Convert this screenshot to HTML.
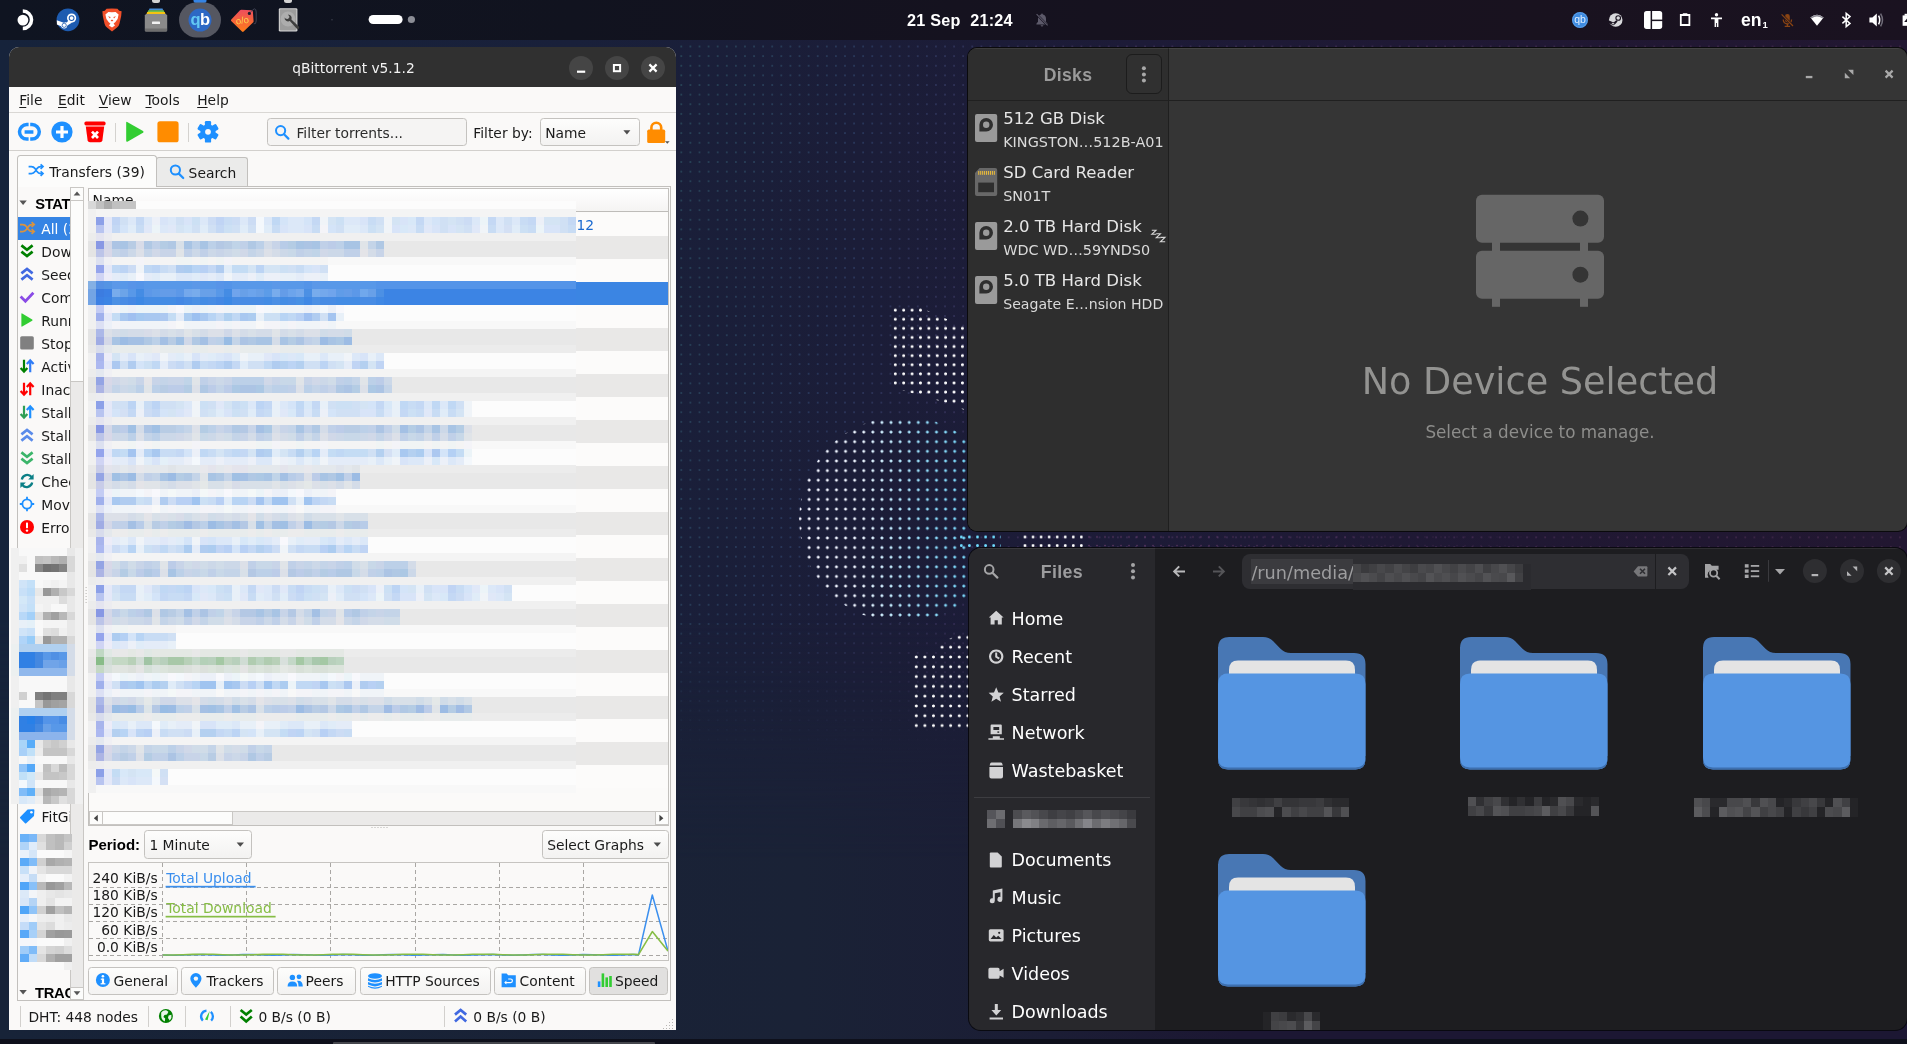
<!DOCTYPE html>
<html lang="en">
<head>
<meta charset="utf-8">
<title>Desktop</title>
<style>
*{box-sizing:border-box;margin:0;padding:0}
html,body{width:1907px;height:1044px;overflow:hidden;background:#1a1e38}
body{position:relative;font-family:"DejaVu Sans","Liberation Sans",sans-serif;font-size:13.85px;color:#000}
.abs{position:absolute}
/* wallpaper */
#wall{position:absolute;left:0;top:0;width:1907px;height:1044px;background:linear-gradient(90deg,#16233b 0%,#19203a 30%,#1b1d38 45%,#1d1b37 60%,#201833 80%,#221731 100%)}
#wall2{position:absolute;left:0;top:0;width:1907px;height:1044px;background:linear-gradient(90deg,#172338 0%,#1a2236 42%,#1b1d35 55%,#1c1733 65%,#1c1733 100%);-webkit-mask-image:linear-gradient(180deg,transparent 620px,#000 860px);mask-image:linear-gradient(180deg,transparent 620px,#000 860px)}
#bottomband{position:absolute;left:0;top:1039px;width:1907px;height:5px;background:#0e101b}
#bottomstrip{position:absolute;left:333px;top:1042px;width:322px;height:2px;background:#45464d;border-radius:1px 1px 0 0}
/* top bar */
#topbar{will-change:transform;position:absolute;left:0;top:0;width:1907px;height:40px;background:linear-gradient(90deg,#0f1421 0%,#11131f 30%,#15121f 50%,#19121f 80%,#1a1220 100%)}
/* windows */
.win{position:absolute;overflow:hidden;will-change:transform}
</style>
</head>
<body>
<div id="wall"></div>
<div id="wall2"></div>
<!--BLOBS-START-->
<div class="abs" style="left:676px;top:40px;width:1231px;height:760px;-webkit-mask-image:linear-gradient(#000 0,#000 560px,transparent 720px);mask-image:linear-gradient(#000 0,#000 560px,transparent 720px)"><div class="abs" style="left:0;top:0;width:1231px;height:760px;background:linear-gradient(100deg,rgba(70,150,150,.42) 0%,rgba(80,120,180,.38) 15%,rgba(130,90,160,.34) 30%,rgba(150,80,130,.3) 100%);-webkit-mask-image:radial-gradient(circle at 4.55px 4.82px,#000 0,#000 0.45px,transparent 1.15px);mask-image:radial-gradient(circle at 4.55px 4.82px,#000 0,#000 0.45px,transparent 1.15px);-webkit-mask-size:9.1px 9.64px;mask-size:9.1px 9.64px;-webkit-mask-position:0.75px 1.70px;mask-position:0.75px 1.70px;"></div></div>
<div class="abs" style="left:884px;top:300px;width:90px;height:120px;background:#ffffff;-webkit-mask-image:radial-gradient(circle at 4.2px 4.55px,#000 0,#000 1.0px,transparent 1.85px);mask-image:radial-gradient(circle at 4.2px 4.55px,#000 0,#000 1.0px,transparent 1.85px);-webkit-mask-size:8.4px 9.1px;mask-size:8.4px 9.1px;-webkit-mask-position:7.10px 5.65px;mask-position:7.10px 5.65px;clip-path:polygon(8px 5px,30px 5px,84px 28px,84px 112px,70px 105px,10px 88px);"></div>
<div class="abs" style="left:0;top:0;width:968px;height:1044px;overflow:hidden"><div class="abs" style="left:798.5px;top:416.0px;width:207.0px;height:207.0px;background:linear-gradient(90deg,#f4f4ff 0%,#eef6ff 30%,#92dcf8 60%,#58cdf5 100%);-webkit-mask-image:radial-gradient(circle at 4.55px 4.82px,#000 0,#000 1.0px,transparent 1.85px);mask-image:radial-gradient(circle at 4.55px 4.82px,#000 0,#000 1.0px,transparent 1.85px);-webkit-mask-size:9.1px 9.64px;mask-size:9.1px 9.64px;-webkit-mask-position:5.65px 1.66px;mask-position:5.65px 1.66px;border-radius:50%;"></div></div>
<div class="abs" style="left:957px;top:531px;width:44px;height:19px;background:#6fdcff;-webkit-mask-image:radial-gradient(circle at 4.05px 4.3px,#000 0,#000 1.0px,transparent 1.8px);mask-image:radial-gradient(circle at 4.05px 4.3px,#000 0,#000 1.0px,transparent 1.8px);-webkit-mask-size:8.1px 8.6px;mask-size:8.1px 8.6px;-webkit-mask-position:0.25px 1.70px;mask-position:0.25px 1.70px;"></div>
<div class="abs" style="left:1021px;top:531px;width:64px;height:19px;background:#ffffff;-webkit-mask-image:radial-gradient(circle at 4.025px 4.3px,#000 0,#000 1.0px,transparent 1.8px);mask-image:radial-gradient(circle at 4.025px 4.3px,#000 0,#000 1.0px,transparent 1.8px);-webkit-mask-size:8.05px 8.6px;mask-size:8.05px 8.6px;-webkit-mask-position:8.02px 1.70px;mask-position:8.02px 1.70px;"></div>
<div class="abs" style="left:1086px;top:531px;width:500px;height:19px;background:linear-gradient(90deg,rgba(170,90,150,.4),rgba(170,90,150,.22) 40%,rgba(170,90,150,0));-webkit-mask-image:radial-gradient(circle at 4.0px 4.3px,#000 0,#000 0.5px,transparent 1.2px);mask-image:radial-gradient(circle at 4.0px 4.3px,#000 0,#000 0.5px,transparent 1.2px);-webkit-mask-size:8.0px 8.6px;mask-size:8.0px 8.6px;-webkit-mask-position:7.00px 1.70px;mask-position:7.00px 1.70px;"></div>
<div class="abs" style="left:900px;top:628px;width:74px;height:110px;background:#ffffff;-webkit-mask-image:radial-gradient(circle at 4.3px 4.9px,#000 0,#000 1.0px,transparent 1.85px);mask-image:radial-gradient(circle at 4.3px 4.9px,#000 0,#000 1.0px,transparent 1.85px);-webkit-mask-size:8.6px 9.8px;mask-size:8.6px 9.8px;-webkit-mask-position:3.40px 4.50px;mask-position:3.40px 4.50px;clip-path:polygon(11px 24px,36px 24px,40px 14px,68px 4px,74px 4px,74px 103px,11px 103px);"></div>
<!--BLOBS-END-->
<div id="bottomband"></div>
<div id="bottomstrip"></div>
<div id="topbar">
<!--TOPBAR-START-->
<!-- left launchers -->
<svg class="abs" style="left:0;top:0" width="440" height="40" viewBox="0 0 440 40">
  <!-- running indicators -->
  <rect x="152" y="-3" width="8" height="6" rx="2.5" fill="#d4d4d4"/>
  <rect x="193.5" y="-3" width="13" height="6" rx="2.5" fill="#3584e4"/>
  <rect x="284" y="-3" width="8" height="6" rx="2.5" fill="#d4d4d4"/>
  <!-- budgie menu -->
  <circle cx="22.900" cy="20.100" r="5.400" fill="#fff"/>
  <path d="M22.800 9.300 A10.500 10.500 0 0 1 22.800 30.300 L22.800 26.800 A7 7 0 0 0 22.800 12.800 Z" fill="#fff"/>
  <!-- steam -->
  <circle cx="68" cy="19.800" r="11.400" fill="#1d5bb0"/>
  <circle cx="71.600" cy="18.100" r="4.600" fill="#fff"/>
  <circle cx="71.600" cy="18.100" r="2.900" fill="#1d5bb0"/>
  <circle cx="71.600" cy="18.100" r="1.900" fill="#fff"/>
  <path d="M56.800 20.200 L63.800 22.800 Q65.400 22 66.800 22.400 L68.400 20.400 L71.800 22.700 L67.400 25.600 A3.300 3.300 0 0 1 61 26.300 L56.900 24.600 Z" fill="#fff"/>
  <circle cx="64.200" cy="25.300" r="2.100" fill="none" stroke="#1d5bb0" stroke-width=".800"/>
  <!-- brave -->
  <path d="M112 8.4 L117.5 8.8 L119.2 10.8 L121.6 11.2 L121.2 16 L119.4 24 Q118.8 26.2 117 27.6 L112 31.4 L107 27.6 Q105.2 26.2 104.6 24 L102.8 16 L102.4 11.2 L104.8 10.8 L106.5 8.8 Z" fill="#f1502a"/>
  <path d="M112 12.2 L115.6 12 L118.6 14.6 L117.6 19 L115.2 22.2 L113.6 23.4 L115 25.4 L112 27.6 L109 25.4 L110.4 23.4 L108.8 22.2 L106.4 19 L105.4 14.6 L108.4 12 Z" fill="#fff"/>
  <path d="M108 16.2 L110.6 17 L110 18.4 Z M116 16.2 L113.4 17 L114 18.4 Z M110.6 20.6 L112 21.6 L113.4 20.6 L112 19.6 Z" fill="#f1502a"/>
  <!-- file manager -->
  <path d="M149.5 8.4 h13 l0.8 2 h-14.6 z" fill="#4a90d9"/>
  <path d="M148.3 10.2 h15.4 l0.8 2 h-17 z" fill="#73c048"/>
  <path d="M147.2 12 h17.6 l0.8 2.2 h-19.2 z" fill="#f5c211"/>
  <path d="M146 14 h20 l1.2 1.6 v15 q0 .8 -.8 .8 h-20.8 q-.8 0 -.8 -.8 v-15 z" fill="#8a8a8a"/>
  <path d="M145 28.6 h22 v2 q0 .8 -.8 .8 h-20.4 q-.8 0 -.8 -.8 z" fill="#6e6e6e"/>
  <rect x="152" y="21.6" width="8" height="2.4" rx=".6" fill="#f2f2f2"/>
  <!-- qb highlighted -->
  <rect x="179" y="2.5" width="42" height="35" rx="17.5" fill="#555761"/>
  <circle cx="200" cy="20.1" r="11.5" fill="#2d68c4"/>
  <text x="200" y="25" text-anchor="middle" font-family="Liberation Sans, sans-serif" font-weight="700" font-size="16.5" letter-spacing="-.6"><tspan fill="#62c8f4">q</tspan><tspan fill="#fff">b</tspan></text>
  <!-- tag -->
  <defs><linearGradient id="tg" x1="0" y1="0" x2="0" y2="1"><stop offset="0" stop-color="#ee4d5e"/><stop offset="1" stop-color="#ff7d17"/></linearGradient></defs>
  <path d="M241.400 9.700 L251.400 10.200 Q252.800 10.400 252.900 11.800 L253.600 21.200 Q253.600 22 253 22.600 L243.600 31.600 Q242.800 32.300 242 31.500 L231.200 21 Q230.600 20.300 231.300 19.500 L240 10.300 Q240.600 9.700 241.400 9.700 Z" fill="url(#tg)"/>
  <circle cx="249.400" cy="13.400" r="1.600" fill="#1a1c2c"/>
  <path d="M250.400 12.400 Q255.800 5.500 256.200 12 V21 Q256 24.500 253.800 23.800" fill="none" stroke="#4a4d5e" stroke-width=".800"/>
  <text x="242.400" y="23.600" text-anchor="middle" font-family="Liberation Sans, sans-serif" font-weight="400" font-size="9.500" fill="#ffd84a" transform="rotate(-8 242.400 21)">o/o</text>
  <!-- disk utility -->
  <rect x="278.8" y="8.2" width="18.6" height="23.4" rx="1.4" fill="#d6d6d6"/>
  <rect x="279.8" y="9.2" width="16.6" height="21.4" rx="1" fill="#9c9c9c"/>
  <circle cx="288" cy="19" r="7.4" fill="#adadad"/>
  <path d="M284.6 17.4 a3.6 3.6 0 0 0 5.2 3.6 l6.8 7.6 q1.2 1 2.2 0 q.9 -1 0 -2.1 l-7.4 -7 a3.6 3.6 0 0 0 -3.4 -5 l1.6 2.4 l-1.6 2 l-2.2 -.2 z" fill="#3e3e3e"/>
  <!-- workspace -->
  <circle cx="332" cy="19.8" r=".8" fill="#3a3d4a"/>
  <rect x="368.6" y="14.9" width="34" height="9.2" rx="4.6" fill="#fff"/>
  <circle cx="411.4" cy="19.5" r="3.6" fill="#8c8e96"/>
</svg>
<!-- clock -->
<div class="abs" style="font-family:'Liberation Sans','DejaVu Sans',sans-serif;font-weight:700;left:907px;top:10.300px;font-size:16.200px;line-height:20px;color:#fff;white-space:pre;letter-spacing:.250px">21 Sep  21:24</div>
<svg class="abs" style="left:1034px;top:12px" width="16" height="16" viewBox="0 0 16 16">
  <path d="M8 1.6 q.9 0 .9 .9 q3.1 .8 3.1 4.3 v3 l1.6 2 v.8 h-11.2 v-.8 l1.6 -2 v-3 q0 -3.5 3.1 -4.3 q0 -.9 .9 -.9 z M6.6 13.2 h2.8 q-.2 1.3 -1.4 1.3 t-1.4 -1.3z" fill="#5d5a6a"/>
  <path d="M2.6 2.2 L13.6 13.4" stroke="#15121f" stroke-width="2.2"/>
  <path d="M2.6 2.2 L13.6 13.4" stroke="#5d5a6a" stroke-width="1.1"/>
</svg>
<!-- tray -->
<svg class="abs" style="left:1560px;top:0" width="347" height="40" viewBox="1560 0 347 40">
  <circle cx="1580" cy="20" r="8" fill="#3e8be0"/>
  <circle cx="1580" cy="20" r="7.4" fill="none" stroke="#79b4f2" stroke-width=".8" opacity=".6"/>
  <text x="1580" y="23.4" text-anchor="middle" font-family="Liberation Sans, sans-serif" font-size="10.5" fill="#dfeeff">qb</text>
  <!-- steam tray -->
  <circle cx="1615.7" cy="20" r="6.8" fill="#d9d9dc"/>
  <circle cx="1618.2" cy="18" r="2.3" fill="none" stroke="#1a1320" stroke-width="1.1"/>
  <path d="M1609 20.6 L1613.6 22.6 L1616.2 20.2 L1617.6 21.6 L1614.8 24.4 L1611 24.2 L1609 23 Z" fill="#1a1320"/>
  <circle cx="1613" cy="23.6" r="1.3" fill="#d9d9dc" stroke="#1a1320" stroke-width=".7"/>
  <!-- layout -->
  <rect x="1644" y="10.9" width="18.2" height="18" rx="2.6" fill="#fff"/>
  <rect x="1650.6" y="10" width="1.5" height="20" fill="#19121f"/>
  <rect x="1652" y="19.6" width="11" height="1.5" fill="#19121f"/>
  <!-- clipboard -->
  <path d="M1680.8 15 h8.6 v10 h-8.6 z" fill="none" stroke="#fff" stroke-width="1.8"/>
  <rect x="1682.6" y="13.2" width="5" height="2.6" rx=".8" fill="#fff"/>
  <!-- accessibility -->
  <circle cx="1716.5" cy="14.8" r="1.7" fill="#fff"/>
  <path d="M1711 17.4 h11 v1.9 h-3.6 v7.6 h-1.5 v-4 h-.8 v4 h-1.5 v-7.6 h-3.6 z" fill="#fff"/>
  <!-- en1 -->
  <text x="1741" y="25.8" font-family="Liberation Sans, sans-serif" font-weight="700" font-size="17.6" fill="#fff">en</text>
  <text x="1762.4" y="28" font-family="Liberation Sans, sans-serif" font-weight="700" font-size="9.5" fill="#fff">1</text>
  <!-- mic muted -->
  <g fill="#8a4413" stroke="none">
    <rect x="1785" y="14" width="4.8" height="8.4" rx="2.4"/>
    <path d="M1782.6 19.6 h1.3 q0 3.6 3.5 3.6 t3.5 -3.6 h1.3 q0 4.2 -4.1 4.8 v1.4 h2 v1.2 h-5.4 v-1.2 h2 v-1.4 q-4.1 -.6 -4.1 -4.8z"/>
  </g>
  <path d="M1781.6 14.4 L1793 26" stroke="#19121f" stroke-width="2.4"/>
  <path d="M1781.6 14.4 L1793 26" stroke="#8a4413" stroke-width="1.2"/>
  <!-- wifi -->
  <path d="M1817 25.8 L1810.4 17.4 Q1817 12.2 1823.6 17.4 Z" fill="#fff"/>
  <path d="M1810.4 17.4 Q1817 12.2 1823.6 17.4 L1822.6 18.6 Q1817 14.2 1811.4 18.6 Z" fill="#8c8a94"/>
  <!-- bluetooth -->
  <path d="M1842.4 16.6 L1850 23.4 L1846.2 26.6 V13.4 L1850 16.6 L1842.4 23.4" fill="none" stroke="#fff" stroke-width="1.5" stroke-linejoin="miter"/>
  <!-- volume -->
  <path d="M1869.4 17.4 h3 l4.4 -3.8 v12.8 l-4.4 -3.8 h-3 z" fill="#fff"/>
  <path d="M1878.6 15.6 q2.2 4.4 0 8.8" fill="none" stroke="#fff" stroke-width="1.5"/>
  <path d="M1880.6 13.6 q3.8 6.4 0 12.8" fill="none" stroke="#6f6c78" stroke-width="1.5"/>
  <!-- battery (cut) -->
  <path d="M1902.6 15.4 h5 v10.4 h-5 z" fill="#fff"/>
  <path d="M1904.6 13.8 h3 v2 h-3z" fill="#fff"/>
  <path d="M1904.2 22 l2.8 -3.6 v3.6z" fill="#19121f"/>
</svg>

<!--TOPBAR-END-->
</div>
<!--QB-START-->
<div class="win" id="qb" style="left:9px;top:47px;width:667px;height:983px;border-radius:10px 10px 0 0;background:#faf9f8"><div class="abs" style="left:-9px;top:-47px;width:1907px;height:1044px">
<div class="abs" style="left:9px;top:47px;width:667px;height:40px;background:#303030;"></div>
<div class="abs" style="left:53.5px;width:600px;text-align:center;top:59px;font-size:13.8px;line-height:18px;color:#f2f2f2;white-space:pre;">qBittorrent v5.1.2</div>
<div class="abs" style="left:569px;top:56px;width:24px;height:24px;border-radius:12px;background:#454545"></div>
<div class="abs" style="left:605px;top:56px;width:24px;height:24px;border-radius:12px;background:#454545"></div>
<div class="abs" style="left:641px;top:56px;width:24px;height:24px;border-radius:12px;background:#454545"></div>
<svg class="abs" style="left:569px;top:56px" width="96" height="24" viewBox="569 56 96 24">
<rect x="577" y="70.6" width="8.2" height="2.2" fill="#fff"/>
<rect x="613.9" y="65" width="6.200" height="6.200" fill="none" stroke="#fff" stroke-width="2"/>
<path d="M649.4 64.4 L656.6 71.6 M656.6 64.4 L649.4 71.6" stroke="#fff" stroke-width="2.2"/>
</svg>
<div class="abs" style="left:19.3px;top:91px;font-size:13.85px;line-height:18px;color:#1a1a1a;white-space:pre;text-underline-offset:2px;"><u>F</u>ile</div>
<div class="abs" style="left:58.0px;top:91px;font-size:13.85px;line-height:18px;color:#1a1a1a;white-space:pre;text-underline-offset:2px;"><u>E</u>dit</div>
<div class="abs" style="left:98.8px;top:91px;font-size:13.85px;line-height:18px;color:#1a1a1a;white-space:pre;text-underline-offset:2px;"><u>V</u>iew</div>
<div class="abs" style="left:145.5px;top:91px;font-size:13.85px;line-height:18px;color:#1a1a1a;white-space:pre;text-underline-offset:2px;"><u>T</u>ools</div>
<div class="abs" style="left:197.2px;top:91px;font-size:13.85px;line-height:18px;color:#1a1a1a;white-space:pre;text-underline-offset:2px;"><u>H</u>elp</div>
<div class="abs" style="left:9px;top:112px;width:667px;height:1px;background:#d9d7d4;"></div>
<div class="abs" style="left:267px;top:118.2px;width:199.500px;height:27.6px;border:1px solid #c4c2bf;border-radius:3.5px;background:#f5f4f3;z-index:-0"></div>
<div class="abs" style="left:540.400px;top:118.2px;width:99.200px;height:28.3px;border:1px solid #c4c2bf;border-radius:3.5px;background:linear-gradient(#fdfdfc,#f3f2f1)"></div>
<svg class="abs" style="left:9px;top:113px" width="667" height="37" viewBox="9 113 667 37">
<g fill="none" stroke="#1e90ff" stroke-width="3.5">
<path d="M28.6 124.5 H26.8 a7.3 7.3 0 0 0 0 14.6 H28.6"/>
<path d="M30.2 124.5 H32 a7.3 7.3 0 0 1 0 14.6 H30.2"/>
<path d="M24.6 131.9 H33.4"/>
</g>
<circle cx="62" cy="132" r="10.6" fill="#1e90ff"/>
<path d="M56 132 H68 M62 126 V138" stroke="#fff" stroke-width="3.2"/>
<rect x="84.4" y="121.4" width="21.2" height="4" rx="1.6" fill="#ff0000"/>
<path d="M85.8 126.4 H104.2 L102.4 140.2 Q102.1 142.3 100 142.3 H90 Q87.9 142.3 87.6 140.2 Z" fill="#ff0000"/>
<path d="M92 131.6 L98 138 M98 131.6 L92 138" stroke="#fff" stroke-width="2.7"/>
<rect x="115" y="123" width="1" height="19" fill="#d4d2cf"/>
<path d="M127.2 121.9 Q126.2 121.4 126.2 122.8 V140.8 Q126.2 142.2 127.4 141.7 L143 132.8 Q144.2 131.9 143 131 Z" fill="#32cd32"/>
<rect x="157.4" y="121.3" width="21.2" height="21" rx="2.6" fill="#ff8c00"/>
<rect x="188" y="123" width="1" height="19" fill="#d4d2cf"/>
<g transform="translate(208 131.8)" fill="#1e90ff">
<circle r="7.6"/>
<g id="tooth"><rect x="-3.1" y="-10.8" width="6.2" height="5" rx="1.2"/></g>
<rect x="-3.1" y="-10.8" width="6.2" height="5" rx="1.2" transform="rotate(60)"/>
<rect x="-3.1" y="-10.8" width="6.2" height="5" rx="1.2" transform="rotate(120)"/>
<rect x="-3.1" y="-10.8" width="6.2" height="5" rx="1.2" transform="rotate(180)"/>
<rect x="-3.1" y="-10.8" width="6.2" height="5" rx="1.2" transform="rotate(240)"/>
<rect x="-3.1" y="-10.8" width="6.2" height="5" rx="1.2" transform="rotate(300)"/>
<circle r="2.9" fill="#faf9f8"/>
</g>
<!-- filter search icon -->
<circle cx="280.6" cy="130.6" r="4.6" fill="none" stroke="#1e90ff" stroke-width="2"/>
<path d="M284 134.2 L288.4 138.6" stroke="#1e90ff" stroke-width="2.2" stroke-linecap="round"/>
<!-- lock -->
<path d="M651.4 131 V127.6 a4.9 4.9 0 0 1 9.8 0 V131" fill="none" stroke="#ff8c00" stroke-width="2.6"/>
<rect x="647.2" y="129.6" width="18" height="13.4" rx="1.6" fill="#ff8c00"/>
<path d="M665 141.2 h4.6 l-2.3 2.6z" fill="#555"/>
<!-- combo arrow -->
<path d="M623.4 130.2 h7 l-3.5 4.2z" fill="#4d4d4d"/>
</svg>
<div class="abs" style="left:9px;top:150px;width:667px;height:1px;background:#d2d0cd;"></div>
<div class="abs" style="left:296.4px;top:124px;font-size:13.85px;line-height:18px;color:#2b2b2b;white-space:pre;">Filter torrents...</div>
<div class="abs" style="left:473.3px;top:124px;font-size:13.85px;line-height:18px;color:#1a1a1a;white-space:pre;">Filter by:</div>
<div class="abs" style="left:545.2px;top:124px;font-size:13.85px;line-height:18px;color:#1a1a1a;white-space:pre;">Name</div>
<div class="abs" style="left:16.5px;top:186px;width:654.5px;height:814.5px;border:1px solid #c2c0bd;background:#faf9f8"></div>
<div class="abs" style="left:156px;top:157.4px;width:91.6px;height:29px;border:1px solid #c2c0bd;border-bottom:none;border-radius:3px 3px 0 0;background:#ebebea"></div>
<div class="abs" style="left:156px;top:186px;width:92px;height:1px;background:#c2c0bd;"></div>
<div class="abs" style="left:16.5px;top:155.4px;width:140px;height:32px;border:1px solid #c2c0bd;border-bottom:none;border-radius:3.5px 3.5px 0 0;background:#fcfcfb"></div>
<div class="abs" style="left:49.2px;top:163px;font-size:13.85px;line-height:18px;color:#1a1a1a;white-space:pre;">Transfers (39)</div>
<div class="abs" style="left:188.6px;top:164px;font-size:13.85px;line-height:18px;color:#1a1a1a;white-space:pre;">Search</div>
<svg class="abs" style="left:26px;top:160px" width="220" height="24" viewBox="26 160 220 24">
<g fill="none" stroke="#1e90ff" stroke-width="1.7">
<path d="M28.6 166.6 H31.4 Q33.6 166.6 35 168.6 L37 171.6 Q38.4 173.6 40.6 173.6 H42.4"/>
<path d="M28.6 173.6 H31.4 Q33.6 173.6 35 171.6 L37 168.6 Q38.4 166.6 40.6 166.6 H42.4"/>
<path d="M40.6 164.4 L43 166.6 L40.6 168.8 M40.6 171.4 L43 173.6 L40.6 175.8"/>
</g>
<circle cx="175.4" cy="170" r="4.6" fill="none" stroke="#1e90ff" stroke-width="2"/>
<path d="M178.8 173.6 L183.2 178" stroke="#1e90ff" stroke-width="2.2" stroke-linecap="round"/>
</svg>
<div class="abs" style="left:17.5px;top:187px;width:52.500px;height:813px;overflow:hidden"><div class="abs" style="left:-17.5px;top:-187px;width:400px;height:1044px">
<div class="abs" style="left:35.3px;top:194px;font-size:14.7px;line-height:20px;color:#000;white-space:pre;font-family:'Liberation Sans','DejaVu Sans',sans-serif;font-weight:700;letter-spacing:-.3px;">STATUS</div>
<div class="abs" style="left:18px;top:217px;width:60px;height:23px;background:#3584e4;"></div>
<div class="abs" style="left:41.3px;top:220px;font-size:13.85px;line-height:18px;color:#fff;white-space:pre;">All (39)</div>
<div class="abs" style="left:41.3px;top:243px;font-size:13.85px;line-height:18px;color:#1a1a1a;white-space:pre;">Downloading (0)</div>
<div class="abs" style="left:41.3px;top:266px;font-size:13.85px;line-height:18px;color:#1a1a1a;white-space:pre;">Seeding (39)</div>
<div class="abs" style="left:41.3px;top:289px;font-size:13.85px;line-height:18px;color:#1a1a1a;white-space:pre;">Completed (39)</div>
<div class="abs" style="left:41.3px;top:312px;font-size:13.85px;line-height:18px;color:#1a1a1a;white-space:pre;">Running (39)</div>
<div class="abs" style="left:41.3px;top:335px;font-size:13.85px;line-height:18px;color:#1a1a1a;white-space:pre;">Stopped (0)</div>
<div class="abs" style="left:41.3px;top:358px;font-size:13.85px;line-height:18px;color:#1a1a1a;white-space:pre;">Active (0)</div>
<div class="abs" style="left:41.3px;top:381px;font-size:13.85px;line-height:18px;color:#1a1a1a;white-space:pre;">Inactive (39)</div>
<div class="abs" style="left:41.3px;top:404px;font-size:13.85px;line-height:18px;color:#1a1a1a;white-space:pre;">Stalled (39)</div>
<div class="abs" style="left:41.3px;top:427px;font-size:13.85px;line-height:18px;color:#1a1a1a;white-space:pre;">Stalled Uploading (39)</div>
<div class="abs" style="left:41.3px;top:450px;font-size:13.85px;line-height:18px;color:#1a1a1a;white-space:pre;">Stalled Downloading (0)</div>
<div class="abs" style="left:41.3px;top:473px;font-size:13.85px;line-height:18px;color:#1a1a1a;white-space:pre;">Checking (0)</div>
<div class="abs" style="left:41.3px;top:496px;font-size:13.85px;line-height:18px;color:#1a1a1a;white-space:pre;">Moving (0)</div>
<div class="abs" style="left:41.3px;top:519px;font-size:13.85px;line-height:18px;color:#1a1a1a;white-space:pre;">Errored (0)</div>
<div class="abs" style="left:41.6px;top:808px;font-size:13.85px;line-height:18px;color:#1a1a1a;white-space:pre;">FitGirl (0)</div>
<div class="abs" style="left:35.1px;top:983px;font-size:14.7px;line-height:20px;color:#000;white-space:pre;font-family:'Liberation Sans','DejaVu Sans',sans-serif;font-weight:700;letter-spacing:-.3px;">TRACKERS</div>
<svg class="abs" style="left:17px;top:187px" width="60" height="813" viewBox="17 187 60 813">
<path d="M19.4 200.6 h7.4 l-3.7 4.4z" fill="#555"/>
<path d="M19.4 990 h7.4 l-3.7 4.4z" fill="#555"/>
<g fill="none" stroke="#d9933f" stroke-width="1.7">
<path d="M20 224.6 H22.8 Q25 224.6 26.4 226.6 L28.4 229.6 Q29.8 231.6 32 231.6 H33.2"/>
<path d="M20 231.6 H22.8 Q25 231.6 26.4 229.6 L28.4 226.6 Q29.8 224.6 32 224.6 H33.2"/>
<path d="M31.6 222.2 L34.2 224.6 L31.6 227 M31.6 229.2 L34.2 231.6 L31.6 234"/></g>
<path d="M21.4 245.4 L27 249.8 L32.6 245.4 M21.4 251.6 L27 256.0 L32.6 251.6" fill="none" stroke="#008000" stroke-width="2.7"/>
<path d="M21.4 279.6 L27 275.2 L32.6 279.6 M21.4 273.4 L27 269.0 L32.6 273.4" fill="none" stroke="#4169e1" stroke-width="2.7"/>
<path d="M20.6 296.6 L25.4 301.2 L33.4 292.8" fill="none" stroke="#8a4be6" stroke-width="2.8"/>
<path d="M22.2 313.4 Q21.4 313 21.4 314 V326 Q21.4 327 22.2 326.6 L32.2 320.8 Q33 320.2 32.2 319.6 Z" fill="#32cd32"/>
<rect x="20.2" y="336.2" width="13.6" height="13.4" rx="1.6" fill="#808080"/>
<path d="M24 359.8 V371 M20.6 368 L24 371.6 L27.4 368" fill="none" stroke="#008000" stroke-width="2.2"/><path d="M30.2 372.2 V361 M26.8 364 L30.2 360.4 L33.6 364" fill="none" stroke="#2f7cf6" stroke-width="2.2"/>
<path d="M24 382.8 V394 M20.6 391 L24 394.6 L27.4 391" fill="none" stroke="#ff0000" stroke-width="2.2"/><path d="M30.2 395.2 V384 M26.8 387 L30.2 383.4 L33.6 387" fill="none" stroke="#ff0000" stroke-width="2.2"/>
<path d="M24 405.8 V417 M20.6 414 L24 417.6 L27.4 414" fill="none" stroke="#2e9e54" stroke-width="2.2"/><path d="M30.2 418.2 V407 M26.8 410 L30.2 406.4 L33.6 410" fill="none" stroke="#1e90ff" stroke-width="2.2"/>
<path d="M21.4 440.6 L27 436.2 L32.6 440.6 M21.4 434.4 L27 430.0 L32.6 434.4" fill="none" stroke="#5a8bea" stroke-width="2.7"/>
<path d="M21.4 452.4 L27 456.8 L32.6 452.4 M21.4 458.6 L27 463.0 L32.6 458.6" fill="none" stroke="#3bb56a" stroke-width="2.7"/>
<g fill="none" stroke="#0b7f86" stroke-width="2.3">
<path d="M21.8 479.4 A5.6 5.6 0 0 1 31.6 477"/><path d="M32.2 482.6 A5.6 5.6 0 0 1 22.4 485"/></g>
<path d="M33.6 474 V479.4 H28.2z" fill="#0b7f86"/><path d="M20.4 488 V482.6 H25.8z" fill="#0b7f86"/>
<circle cx="27" cy="504" r="4.6" fill="none" stroke="#1e90ff" stroke-width="1.8"/><path d="M27 496.8 V499.6 M27 508.4 V511.2 M19.8 504 H22.6 M31.4 504 H34.2" stroke="#1e90ff" stroke-width="1.8"/>
<circle cx="27" cy="527" r="7" fill="#ff0000"/><rect x="26" y="522.6" width="2" height="5.6" rx=".6" fill="#fff"/><circle cx="27" cy="530.6" r="1.2" fill="#fff"/>
<path d="M27.6 809.6 L33.4 809.2 Q34.4 809.2 34.4 810.2 L34 816 L26.2 823.2 Q25.6 823.8 25 823.2 L20.2 818.2 Q19.6 817.6 20.2 817 Z" fill="#1e90ff"/><circle cx="31.4" cy="812.2" r="1.3" fill="#faf9f8"/>
</svg>
</div></div>
<div class="abs" style="left:70px;top:187px;width:13.500px;height:813px;background:#ebeae9;border-left:1px solid #c9c7c4;border-right:1px solid #c9c7c4"></div>
<div class="abs" style="left:70px;top:187px;width:13.500px;height:13.500px;background:#fcfcfb;border:1px solid #c9c7c4"></div>
<div class="abs" style="left:70px;top:199.500px;width:13.500px;height:182px;background:#fcfcfb;border:1px solid #c9c7c4"></div>
<div class="abs" style="left:70px;top:986.500px;width:13.500px;height:13.500px;background:#fcfcfb;border:1px solid #c9c7c4"></div>
<svg class="abs" style="left:70px;top:187px" width="14" height="813" viewBox="70 187 14 813"><path d="M73.6 195.4 h6.8 l-3.4 -4z" fill="#555"/><path d="M73.6 991.2 h6.8 l-3.4 4z" fill="#555"/></svg>
<svg class="abs" style="left:0;top:540px" width="90" height="440" viewBox="0 540 90 440" shape-rendering="crispEdges">
<path fill="#f0f0f0" d="M11 548h8v8h-8zM75 548h8v8h-8zM11 556h16v8h-16zM75 556h8v8h-8zM11 564h8v8h-8zM75 564h8v8h-8zM11 572h8v8h-8zM75 572h8v8h-8zM11 580h8v8h-8zM51 580h8v8h-8zM75 580h8v8h-8zM11 588h8v8h-8zM75 588h8v8h-8zM11 596h8v8h-8zM35 596h24v8h-24zM75 596h8v8h-8zM11 604h8v8h-8zM43 604h8v8h-8zM75 604h8v8h-8zM11 612h8v8h-8zM75 612h8v8h-8zM11 620h8v8h-8zM75 620h8v8h-8zM11 628h8v8h-8zM59 628h8v8h-8zM75 628h8v8h-8zM11 636h8v8h-8zM75 636h8v8h-8zM75 644h8v8h-8zM75 652h8v8h-8zM75 660h8v8h-8zM75 668h8v8h-8zM11 676h8v8h-8zM75 676h8v8h-8zM11 684h8v8h-8zM75 684h8v8h-8zM11 692h8v8h-8zM75 692h8v8h-8zM11 700h8v8h-8zM75 700h8v8h-8zM75 708h8v8h-8zM75 716h8v8h-8zM75 724h8v8h-8zM75 732h8v8h-8zM11 740h8v8h-8zM75 740h8v8h-8zM11 748h8v8h-8zM75 748h8v8h-8zM11 756h8v8h-8zM75 756h8v8h-8zM11 764h8v8h-8zM75 764h8v8h-8zM11 772h8v8h-8zM75 772h8v8h-8zM11 780h8v8h-8zM75 780h8v8h-8zM11 788h8v8h-8zM75 788h8v8h-8zM11 796h8v8h-8zM35 796h8v8h-8zM75 796h8v8h-8z"/>
<path fill="#f8f8f8" d="M19 548h48v8h-48zM27 556h8v8h-8zM27 564h8v8h-8zM19 572h48v8h-48zM35 580h8v8h-8zM51 604h16v8h-16zM35 620h8v8h-8zM35 628h8v8h-8zM19 676h48v8h-48zM19 684h48v8h-48zM27 692h8v8h-8zM19 700h16v8h-16zM19 756h8v8h-8zM35 756h32v8h-32zM35 780h32v8h-32z"/>
<path fill="#e8e8e8" d="M67 548h8v8h-8zM67 572h8v8h-8zM67 580h8v8h-8zM35 588h8v8h-8zM67 596h8v8h-8zM67 604h8v8h-8zM67 620h8v8h-8zM67 628h8v8h-8zM35 636h8v8h-8zM67 676h8v8h-8zM67 684h8v8h-8zM35 740h8v8h-8zM67 740h8v8h-8zM67 756h8v8h-8zM35 772h8v8h-8zM67 780h8v8h-8z"/>
<path fill="#c0c0c0" d="M35 556h8v8h-8zM43 764h8v8h-8z"/>
<path fill="#c4c4c4" d="M43 556h8v8h-8zM35 700h8v8h-8zM43 748h24v8h-24zM43 772h16v8h-16z"/>
<path fill="#b8b8b8" d="M51 556h8v8h-8zM59 612h8v8h-8zM43 796h8v8h-8z"/>
<path fill="#b0b0b0" d="M59 556h8v8h-8zM51 588h8v8h-8zM43 612h8v8h-8zM51 636h16v8h-16zM51 788h8v8h-8z"/>
<path fill="#d8d8d8" d="M67 556h8v8h-8zM67 564h8v8h-8zM67 588h8v8h-8zM67 612h8v8h-8zM67 636h8v8h-8zM67 692h8v8h-8zM67 700h8v8h-8zM67 748h8v8h-8zM51 764h8v8h-8zM67 764h8v8h-8zM67 772h8v8h-8zM67 788h8v8h-8zM67 796h8v8h-8z"/>
<path fill="#e0e0e0" d="M19 564h8v8h-8zM35 612h8v8h-8zM43 628h8v8h-8zM35 788h8v8h-8zM59 796h8v8h-8z"/>
<path fill="#888888" d="M35 564h8v8h-8z"/>
<path fill="#707070" d="M43 564h8v8h-8z"/>
<path fill="#747474" d="M51 564h8v8h-8zM43 692h8v8h-8z"/>
<path fill="#848484" d="M59 564h8v8h-8z"/>
<path fill="#d0e4f8" d="M19 580h8v8h-8zM19 604h8v8h-8zM19 628h8v8h-8zM27 780h8v8h-8z"/>
<path fill="#c4e0f8" d="M27 580h8v8h-8zM27 604h8v8h-8z"/>
<path fill="#f4f4f4" d="M43 580h8v8h-8zM59 580h8v8h-8zM35 604h8v8h-8zM43 620h24v8h-24zM35 764h8v8h-8z"/>
<path fill="#c8e0f8" d="M19 588h8v8h-8zM27 596h8v8h-8zM27 628h8v8h-8z"/>
<path fill="#bcdcf8" d="M27 588h8v8h-8z"/>
<path fill="#989898" d="M43 588h8v8h-8zM43 636h8v8h-8zM43 700h8v8h-8z"/>
<path fill="#c8c8c8" d="M59 588h8v8h-8zM51 740h8v8h-8zM59 772h8v8h-8zM51 796h8v8h-8z"/>
<path fill="#d4e8f8" d="M19 596h8v8h-8z"/>
<path fill="#dcdcdc" d="M59 596h8v8h-8zM51 628h8v8h-8z"/>
<path fill="#b8d8f8" d="M19 612h8v8h-8z"/>
<path fill="#a4d0f8" d="M27 612h8v8h-8z"/>
<path fill="#a0a0a0" d="M51 612h8v8h-8zM51 700h8v8h-8z"/>
<path fill="#e8f0f8" d="M19 620h8v8h-8zM27 756h8v8h-8z"/>
<path fill="#e4f0f8" d="M27 620h8v8h-8z"/>
<path fill="#b0d4f8" d="M19 636h8v8h-8z"/>
<path fill="#98ccf8" d="M27 636h8v8h-8z"/>
<path fill="#ecf0f0" d="M11 644h8v8h-8zM11 652h8v8h-8zM11 660h8v8h-8zM11 668h8v8h-8zM11 708h8v8h-8zM11 716h8v8h-8zM11 724h8v8h-8zM11 732h8v8h-8z"/>
<path fill="#b0d0f0" d="M19 644h48v8h-48zM19 708h48v8h-48z"/>
<path fill="#d4dce8" d="M67 644h8v8h-8zM67 652h8v8h-8zM67 660h8v8h-8zM67 668h8v8h-8zM67 708h8v8h-8zM67 716h8v8h-8zM67 724h8v8h-8zM67 732h8v8h-8z"/>
<path fill="#3080e4" d="M19 652h16v8h-16zM19 660h16v8h-16zM19 716h8v8h-8zM19 724h16v8h-16z"/>
<path fill="#4488e0" d="M35 652h8v8h-8zM35 660h8v8h-8zM35 724h8v8h-8z"/>
<path fill="#5898e8" d="M43 652h8v8h-8zM59 652h8v8h-8zM51 724h16v8h-16z"/>
<path fill="#5090e4" d="M51 652h8v8h-8z"/>
<path fill="#70a4e8" d="M43 660h16v8h-16z"/>
<path fill="#68a0e8" d="M59 660h8v8h-8zM43 724h8v8h-8z"/>
<path fill="#90b8ec" d="M19 668h48v8h-48z"/>
<path fill="#d0d0d0" d="M19 692h8v8h-8zM43 740h8v8h-8zM59 740h8v8h-8z"/>
<path fill="#808080" d="M35 692h8v8h-8zM51 692h16v8h-16z"/>
<path fill="#a4a4a4" d="M59 700h8v8h-8z"/>
<path fill="#2880e8" d="M27 716h8v8h-8z"/>
<path fill="#3880e0" d="M35 716h8v8h-8z"/>
<path fill="#5494e8" d="M43 716h16v8h-16z"/>
<path fill="#488ce4" d="M59 716h8v8h-8z"/>
<path fill="#8cb4ec" d="M19 732h48v8h-48z"/>
<path fill="#a8d4f8" d="M19 740h8v8h-8z"/>
<path fill="#58acf8" d="M27 740h8v8h-8z"/>
<path fill="#a8d0f8" d="M19 748h8v8h-8z"/>
<path fill="#c0e0f8" d="M27 748h8v8h-8zM19 772h8v8h-8z"/>
<path fill="#ececec" d="M35 748h8v8h-8z"/>
<path fill="#90c4f8" d="M19 764h8v8h-8z"/>
<path fill="#54a8f8" d="M27 764h8v8h-8z"/>
<path fill="#bcbcbc" d="M59 764h8v8h-8z"/>
<path fill="#d0e8f8" d="M27 772h8v8h-8z"/>
<path fill="#f4f8fc" d="M19 780h8v8h-8z"/>
<path fill="#80bcf8" d="M19 788h8v8h-8z"/>
<path fill="#60b0f8" d="M27 788h8v8h-8z"/>
<path fill="#a8a8a8" d="M43 788h8v8h-8z"/>
<path fill="#b4b4b4" d="M59 788h8v8h-8z"/>
<path fill="#d8e8f8" d="M19 796h8v8h-8z"/>
<path fill="#e0ecf8" d="M27 796h8v8h-8z"/>
<rect x="20.0" y="834" width="8.8" height="8" fill="#6ab2f8"/>
<rect x="28.7" y="834" width="8.8" height="8" fill="#7ab8f8"/>
<rect x="37.4" y="834" width="8.8" height="8" fill="#d8d8d8"/>
<rect x="46.1" y="834" width="8.8" height="8" fill="#c0c0c0"/>
<rect x="54.8" y="834" width="8.8" height="8" fill="#b8b8b8"/>
<rect x="63.5" y="834" width="8.8" height="8" fill="#c4c4c4"/>
<rect x="20.0" y="842" width="8.8" height="8" fill="#b0d4f8"/>
<rect x="28.7" y="842" width="8.8" height="8" fill="#e0ecfa"/>
<rect x="37.4" y="842" width="8.8" height="8" fill="#e0e0e0"/>
<rect x="46.1" y="842" width="8.8" height="8" fill="#c0c0c0"/>
<rect x="54.8" y="842" width="8.8" height="8" fill="#b8b8b8"/>
<rect x="63.5" y="842" width="8.8" height="8" fill="#d0d0d0"/>
<rect x="20.0" y="850" width="8.8" height="8" fill="#eaf1fa"/>
<rect x="28.7" y="850" width="8.8" height="8" fill="#d5e6f8"/>
<rect x="37.4" y="850" width="8.8" height="8" fill="#fafafa"/>
<rect x="46.1" y="850" width="8.8" height="8" fill="#fafafa"/>
<rect x="54.8" y="850" width="8.8" height="8" fill="#fafafa"/>
<rect x="63.5" y="850" width="8.8" height="8" fill="#f5f5f5"/>
<rect x="20.0" y="858" width="8.8" height="8" fill="#5aaaf8"/>
<rect x="28.7" y="858" width="8.8" height="8" fill="#80bcf8"/>
<rect x="37.4" y="858" width="8.8" height="8" fill="#d0d0d0"/>
<rect x="46.1" y="858" width="8.8" height="8" fill="#a8a8a8"/>
<rect x="54.8" y="858" width="8.8" height="8" fill="#b0b0b0"/>
<rect x="63.5" y="858" width="8.8" height="8" fill="#b4b4b4"/>
<rect x="20.0" y="866" width="8.8" height="8" fill="#c8e0f8"/>
<rect x="28.7" y="866" width="8.8" height="8" fill="#f0f3f8"/>
<rect x="37.4" y="866" width="8.8" height="8" fill="#e4e4e4"/>
<rect x="46.1" y="866" width="8.8" height="8" fill="#d8d8d8"/>
<rect x="54.8" y="866" width="8.8" height="8" fill="#d8d8d8"/>
<rect x="63.5" y="866" width="8.8" height="8" fill="#d8d8d8"/>
<rect x="20.0" y="874" width="8.8" height="8" fill="#e5eefa"/>
<rect x="28.7" y="874" width="8.8" height="8" fill="#c5dcf5"/>
<rect x="37.4" y="874" width="8.8" height="8" fill="#f3f3f3"/>
<rect x="46.1" y="874" width="8.8" height="8" fill="#fafafa"/>
<rect x="54.8" y="874" width="8.8" height="8" fill="#fafafa"/>
<rect x="63.5" y="874" width="8.8" height="8" fill="#f3f3f3"/>
<rect x="20.0" y="882" width="8.8" height="8" fill="#50a5f8"/>
<rect x="28.7" y="882" width="8.8" height="8" fill="#88c0f8"/>
<rect x="37.4" y="882" width="8.8" height="8" fill="#b8b8b8"/>
<rect x="46.1" y="882" width="8.8" height="8" fill="#989898"/>
<rect x="54.8" y="882" width="8.8" height="8" fill="#a0a0a0"/>
<rect x="63.5" y="882" width="8.8" height="8" fill="#b8b8b8"/>
<rect x="20.0" y="890" width="8.8" height="8" fill="#dce9f8"/>
<rect x="28.7" y="890" width="8.8" height="8" fill="#f3f5f8"/>
<rect x="37.4" y="890" width="8.8" height="8" fill="#efefef"/>
<rect x="46.1" y="890" width="8.8" height="8" fill="#e8e8e8"/>
<rect x="54.8" y="890" width="8.8" height="8" fill="#e4e4e4"/>
<rect x="63.5" y="890" width="8.8" height="8" fill="#e8e8e8"/>
<rect x="20.0" y="898" width="8.8" height="8" fill="#d8e6f8"/>
<rect x="28.7" y="898" width="8.8" height="8" fill="#b5d4f5"/>
<rect x="37.4" y="898" width="8.8" height="8" fill="#efefef"/>
<rect x="46.1" y="898" width="8.8" height="8" fill="#e4e4e4"/>
<rect x="54.8" y="898" width="8.8" height="8" fill="#f3f3f3"/>
<rect x="63.5" y="898" width="8.8" height="8" fill="#f3f3f3"/>
<rect x="20.0" y="906" width="8.8" height="8" fill="#50a5f8"/>
<rect x="28.7" y="906" width="8.8" height="8" fill="#90c4f8"/>
<rect x="37.4" y="906" width="8.8" height="8" fill="#d0d0d0"/>
<rect x="46.1" y="906" width="8.8" height="8" fill="#a0a0a0"/>
<rect x="54.8" y="906" width="8.8" height="8" fill="#c0c0c0"/>
<rect x="63.5" y="906" width="8.8" height="8" fill="#b4b4b4"/>
<rect x="20.0" y="914" width="8.8" height="8" fill="#e8effa"/>
<rect x="28.7" y="914" width="8.8" height="8" fill="#f5f6f8"/>
<rect x="37.4" y="914" width="8.8" height="8" fill="#eeeeee"/>
<rect x="46.1" y="914" width="8.8" height="8" fill="#ececec"/>
<rect x="54.8" y="914" width="8.8" height="8" fill="#f0f0f0"/>
<rect x="63.5" y="914" width="8.8" height="8" fill="#e8e8e8"/>
<rect x="20.0" y="922" width="8.8" height="8" fill="#c5dcf8"/>
<rect x="28.7" y="922" width="8.8" height="8" fill="#a0ccf8"/>
<rect x="37.4" y="922" width="8.8" height="8" fill="#e4e4e4"/>
<rect x="46.1" y="922" width="8.8" height="8" fill="#dcdcdc"/>
<rect x="54.8" y="922" width="8.8" height="8" fill="#f0f0f0"/>
<rect x="63.5" y="922" width="8.8" height="8" fill="#ececec"/>
<rect x="20.0" y="930" width="8.8" height="8" fill="#58a8f8"/>
<rect x="28.7" y="930" width="8.8" height="8" fill="#a8d0f8"/>
<rect x="37.4" y="930" width="8.8" height="8" fill="#d4d4d4"/>
<rect x="46.1" y="930" width="8.8" height="8" fill="#a0a0a0"/>
<rect x="54.8" y="930" width="8.8" height="8" fill="#989898"/>
<rect x="63.5" y="930" width="8.8" height="8" fill="#9a9a9a"/>
<rect x="20.0" y="938" width="8.8" height="8" fill="#f5f6fa"/>
<rect x="28.7" y="938" width="8.8" height="8" fill="#f5f6fa"/>
<rect x="37.4" y="938" width="8.8" height="8" fill="#fafafa"/>
<rect x="46.1" y="938" width="8.8" height="8" fill="#fafafa"/>
<rect x="54.8" y="938" width="8.8" height="8" fill="#fafafa"/>
<rect x="63.5" y="938" width="8.8" height="8" fill="#f0f0f0"/>
<rect x="20.0" y="946" width="8.8" height="8" fill="#a0ccf8"/>
<rect x="28.7" y="946" width="8.8" height="8" fill="#80bcf8"/>
<rect x="37.4" y="946" width="8.8" height="8" fill="#e4e4e4"/>
<rect x="46.1" y="946" width="8.8" height="8" fill="#d4d4d4"/>
<rect x="54.8" y="946" width="8.8" height="8" fill="#d0d0d0"/>
<rect x="63.5" y="946" width="8.8" height="8" fill="#dcdcdc"/>
<rect x="20.0" y="954" width="8.8" height="8" fill="#60acf8"/>
<rect x="28.7" y="954" width="8.8" height="8" fill="#c0dcf8"/>
<rect x="37.4" y="954" width="8.8" height="8" fill="#d8d8d8"/>
<rect x="46.1" y="954" width="8.8" height="8" fill="#b0b0b0"/>
<rect x="54.8" y="954" width="8.8" height="8" fill="#a0a0a0"/>
<rect x="63.5" y="954" width="8.8" height="8" fill="#a0a0a0"/>
<rect x="20.0" y="962" width="8.8" height="8" fill="#fafafa"/>
<rect x="28.7" y="962" width="8.8" height="8" fill="#fafafa"/>
<rect x="37.4" y="962" width="8.8" height="8" fill="#fafafa"/>
<rect x="46.1" y="962" width="8.8" height="8" fill="#fafafa"/>
<rect x="54.8" y="962" width="8.8" height="8" fill="#fafafa"/>
<rect x="63.5" y="962" width="8.8" height="8" fill="#f0f0f0"/>
</svg>
<div class="abs" style="left:88px;top:187.5px;width:581px;height:638px;border:1px solid #c2c0bd;background:#fbfaf9"></div>
<div class="abs" style="left:89px;top:188.5px;width:579px;height:23.5px;background:linear-gradient(#ffffff,#f5f4f3);border-bottom:1.500px solid #bebcb9"></div>
<div class="abs" style="left:92.6px;top:191px;font-size:13.85px;line-height:18px;color:#1a1a1a;white-space:pre;">Name</div>
<div class="abs" style="left:89px;top:213px;width:579px;height:23px;background:#fcfbfa;"></div>
<div class="abs" style="left:89px;top:236px;width:579px;height:23px;background:#e9e8e7;"></div>
<div class="abs" style="left:89px;top:259px;width:579px;height:23px;background:#fcfbfa;"></div>
<div class="abs" style="left:89px;top:282px;width:579px;height:23px;background:#3b85e3;"></div>
<div class="abs" style="left:89px;top:305px;width:579px;height:23px;background:#fcfbfa;"></div>
<div class="abs" style="left:89px;top:328px;width:579px;height:23px;background:#e9e8e7;"></div>
<div class="abs" style="left:89px;top:351px;width:579px;height:23px;background:#fcfbfa;"></div>
<div class="abs" style="left:89px;top:374px;width:579px;height:23px;background:#e9e8e7;"></div>
<div class="abs" style="left:89px;top:397px;width:579px;height:23px;background:#fcfbfa;"></div>
<div class="abs" style="left:89px;top:420px;width:579px;height:23px;background:#e9e8e7;"></div>
<div class="abs" style="left:89px;top:443px;width:579px;height:23px;background:#fcfbfa;"></div>
<div class="abs" style="left:89px;top:466px;width:579px;height:23px;background:#e9e8e7;"></div>
<div class="abs" style="left:89px;top:489px;width:579px;height:23px;background:#fcfbfa;"></div>
<div class="abs" style="left:89px;top:512px;width:579px;height:23px;background:#e9e8e7;"></div>
<div class="abs" style="left:89px;top:535px;width:579px;height:23px;background:#fcfbfa;"></div>
<div class="abs" style="left:89px;top:558px;width:579px;height:23px;background:#e9e8e7;"></div>
<div class="abs" style="left:89px;top:581px;width:579px;height:23px;background:#fcfbfa;"></div>
<div class="abs" style="left:89px;top:604px;width:579px;height:23px;background:#e9e8e7;"></div>
<div class="abs" style="left:89px;top:627px;width:579px;height:23px;background:#fcfbfa;"></div>
<div class="abs" style="left:89px;top:650px;width:579px;height:23px;background:#e9e8e7;"></div>
<div class="abs" style="left:89px;top:673px;width:579px;height:23px;background:#fcfbfa;"></div>
<div class="abs" style="left:89px;top:696px;width:579px;height:23px;background:#e9e8e7;"></div>
<div class="abs" style="left:89px;top:719px;width:579px;height:23px;background:#fcfbfa;"></div>
<div class="abs" style="left:89px;top:742px;width:579px;height:23px;background:#e9e8e7;"></div>
<div class="abs" style="left:89px;top:765px;width:579px;height:23px;background:#fcfbfa;"></div>
<div class="abs" style="left:576.4px;top:216px;font-size:13.85px;line-height:18px;color:#1b6ad0;white-space:pre;">12</div>
<svg class="abs" style="left:88px;top:200px" width="490" height="596" viewBox="88 200 490 596" shape-rendering="crispEdges">
<path fill="#d8d8d8" d="M88 201h8v8h-8z"/>
<path fill="#c0c0c0" d="M96 201h8v8h-8zM112 201h8v8h-8z"/>
<path fill="#acacac" d="M104 201h8v8h-8z"/>
<path fill="#c4c4c4" d="M120 201h16v8h-16z"/>
<path fill="#fcfcfc" d="M136 201h440v8h-440zM328 265h248v8h-248zM328 273h248v8h-248zM344 305h232v8h-232zM344 313h232v8h-232zM384 353h192v8h-192zM384 361h192v8h-192zM472 401h104v8h-104zM472 409h104v8h-104zM472 449h104v8h-104zM472 457h104v8h-104zM336 489h240v8h-240zM336 497h240v8h-240zM368 537h208v8h-208zM368 545h208v8h-208zM512 585h64v8h-64zM512 593h64v8h-64zM176 633h400v8h-400zM176 641h400v8h-400zM384 673h192v8h-192zM384 681h192v8h-192zM352 721h224v8h-224zM352 729h224v8h-224zM168 769h408v8h-408zM168 777h408v8h-408z"/>
<path fill="#f0f0f0" d="M88 209h8v8h-8zM88 217h8v8h-8zM88 225h8v8h-8zM112 233h464v8h-464zM88 257h8v8h-8zM88 265h8v8h-8zM88 273h8v8h-8zM88 305h8v8h-8zM88 313h8v8h-8zM88 321h8v8h-8zM88 353h8v8h-8zM88 361h8v8h-8zM104 393h472v8h-472zM88 401h8v8h-8zM88 409h8v8h-8zM112 417h464v8h-464zM88 441h8v8h-8zM88 449h8v8h-8zM88 457h8v8h-8zM88 489h8v8h-8zM88 497h8v8h-8zM88 505h8v8h-8zM88 537h8v8h-8zM88 545h8v8h-8zM104 577h472v8h-472zM88 585h8v8h-8zM88 593h8v8h-8zM112 601h464v8h-464zM88 625h8v8h-8zM88 633h8v8h-8zM88 641h8v8h-8zM88 673h8v8h-8zM88 681h8v8h-8zM88 689h8v8h-8zM88 721h8v8h-8zM88 729h8v8h-8zM104 761h472v8h-472zM88 769h8v8h-8zM88 777h8v8h-8zM88 785h8v8h-8z"/>
<path fill="#f4f4f4" d="M96 209h480v8h-480zM112 257h24v8h-24zM144 257h32v8h-32zM192 257h8v8h-8zM208 257h8v8h-8zM232 257h96v8h-96zM112 369h464v8h-464zM112 441h16v8h-16zM144 441h8v8h-8zM160 441h32v8h-32zM200 441h56v8h-56zM280 441h16v8h-16zM304 441h16v8h-16zM328 441h48v8h-48zM384 441h8v8h-8zM424 441h8v8h-8zM440 441h8v8h-8zM456 441h8v8h-8zM112 553h464v8h-464zM128 625h48v8h-48zM112 737h464v8h-464z"/>
<path fill="#8ca0e8" d="M96 217h8v8h-8zM96 401h8v8h-8zM96 585h8v8h-8zM96 769h8v8h-8z"/>
<path fill="#e4e8f8" d="M104 217h8v8h-8zM104 225h8v8h-8zM104 265h8v8h-8zM104 313h8v8h-8zM104 361h8v8h-8zM104 401h8v8h-8zM104 409h8v8h-8zM104 449h8v8h-8zM104 497h8v8h-8zM104 545h8v8h-8zM104 585h8v8h-8zM104 593h8v8h-8zM104 633h8v8h-8zM104 681h8v8h-8zM104 729h8v8h-8zM104 769h8v8h-8zM104 777h8v8h-8z"/>
<path fill="#c0d4f4" d="M112 217h8v8h-8zM216 217h8v8h-8zM352 361h8v8h-8zM376 361h8v8h-8zM216 545h8v8h-8zM360 545h8v8h-8zM296 585h8v8h-8zM448 585h8v8h-8zM312 681h8v8h-8zM288 729h8v8h-8z"/>
<path fill="#d0e0f4" d="M120 217h8v8h-8zM176 217h8v8h-8zM376 217h8v8h-8zM440 217h8v8h-8zM456 217h8v8h-8zM504 217h8v8h-8zM560 217h8v8h-8zM192 225h8v8h-8zM208 225h8v8h-8zM232 225h8v8h-8zM248 225h8v8h-8zM336 225h8v8h-8zM440 225h8v8h-8zM464 225h8v8h-8zM560 225h8v8h-8zM168 265h8v8h-8zM288 265h8v8h-8zM320 265h8v8h-8zM320 313h8v8h-8zM120 361h8v8h-8zM184 361h8v8h-8zM248 361h16v8h-16zM304 361h16v8h-16zM328 361h8v8h-8zM112 401h16v8h-16zM160 401h16v8h-16zM208 401h8v8h-8zM328 401h8v8h-8zM352 401h8v8h-8zM456 401h8v8h-8zM200 409h8v8h-8zM240 409h8v8h-8zM336 409h24v8h-24zM368 449h8v8h-8zM288 497h8v8h-8zM168 545h8v8h-8zM288 545h8v8h-8zM112 585h8v8h-8zM152 585h8v8h-8zM320 585h8v8h-8zM360 585h8v8h-8zM424 585h8v8h-8zM504 585h8v8h-8zM216 593h8v8h-8zM272 593h8v8h-8zM312 593h8v8h-8zM344 593h16v8h-16zM384 593h8v8h-8zM168 633h8v8h-8zM112 681h8v8h-8zM176 681h8v8h-8zM256 681h8v8h-8zM168 729h16v8h-16zM312 729h8v8h-8zM160 769h8v8h-8z"/>
<path fill="#dce8f8" d="M128 217h8v8h-8zM144 217h8v8h-8zM168 217h8v8h-8zM200 217h8v8h-8zM240 217h8v8h-8zM264 217h8v8h-8zM288 217h16v8h-16zM344 217h16v8h-16zM424 217h8v8h-8zM472 217h8v8h-8zM496 217h8v8h-8zM512 217h8v8h-8zM160 225h8v8h-8zM288 225h16v8h-16zM360 225h8v8h-8zM408 225h8v8h-8zM496 225h8v8h-8zM176 273h16v8h-16zM216 273h8v8h-8zM216 353h8v8h-8zM288 353h8v8h-8zM320 353h8v8h-8zM352 353h8v8h-8zM376 353h8v8h-8zM184 401h8v8h-8zM248 401h8v8h-8zM280 401h8v8h-8zM424 401h8v8h-8zM440 401h8v8h-8zM304 409h8v8h-8zM384 409h8v8h-8zM256 457h16v8h-16zM296 457h8v8h-8zM376 457h8v8h-8zM408 457h16v8h-16zM448 457h8v8h-8zM128 537h8v8h-8zM216 537h16v8h-16zM264 537h8v8h-8zM344 537h8v8h-8zM360 537h8v8h-8zM200 585h8v8h-8zM240 585h8v8h-8zM264 585h8v8h-8zM336 585h8v8h-8zM488 585h8v8h-8zM208 593h8v8h-8zM264 593h8v8h-8zM368 593h8v8h-8zM432 593h8v8h-8zM496 593h8v8h-8zM112 641h8v8h-8zM120 721h8v8h-8zM136 721h16v8h-16zM232 721h8v8h-8zM288 721h16v8h-16zM320 721h8v8h-8zM120 777h8v8h-8zM136 777h16v8h-16z"/>
<path fill="#c4d8f4" d="M136 217h8v8h-8zM312 217h8v8h-8zM416 217h8v8h-8zM488 217h8v8h-8zM528 217h8v8h-8zM568 217h8v8h-8zM112 225h8v8h-8zM216 225h8v8h-8zM208 265h8v8h-8zM176 361h8v8h-8zM208 361h8v8h-8zM232 361h8v8h-8zM264 401h8v8h-8zM312 401h8v8h-8zM376 401h8v8h-8zM416 401h8v8h-8zM128 409h8v8h-8zM152 409h8v8h-8zM256 409h8v8h-8zM296 409h8v8h-8zM400 409h8v8h-8zM176 449h8v8h-8zM240 449h8v8h-8zM320 497h8v8h-8zM248 545h8v8h-8zM296 545h8v8h-8zM120 585h16v8h-16zM168 585h8v8h-8zM248 585h8v8h-8zM160 593h8v8h-8zM184 593h8v8h-8zM296 593h8v8h-8zM392 593h8v8h-8zM448 593h8v8h-8zM184 681h8v8h-8zM216 729h8v8h-8zM328 729h8v8h-8z"/>
<path fill="#ecf0f8" d="M152 217h8v8h-8zM536 217h8v8h-8zM248 273h8v8h-8zM264 273h16v8h-16zM304 273h16v8h-16zM128 305h8v8h-8zM192 305h8v8h-8zM304 305h8v8h-8zM328 305h8v8h-8zM104 321h8v8h-8zM136 409h8v8h-8zM320 409h8v8h-8zM192 449h8v8h-8zM184 457h8v8h-8zM216 457h8v8h-8zM248 457h8v8h-8zM280 457h8v8h-8zM424 457h8v8h-8zM440 457h8v8h-8zM192 489h8v8h-8zM272 489h16v8h-16zM304 489h8v8h-8zM152 497h8v8h-8zM104 505h8v8h-8zM376 585h8v8h-8zM328 593h8v8h-8zM416 593h8v8h-8zM128 641h8v8h-8zM136 673h8v8h-8zM200 673h16v8h-16zM224 673h8v8h-8zM264 673h8v8h-8zM352 681h8v8h-8zM104 689h8v8h-8zM152 729h8v8h-8z"/>
<path fill="#d8e4f8" d="M160 217h8v8h-8zM184 217h8v8h-8zM360 217h8v8h-8zM400 217h8v8h-8zM280 225h8v8h-8zM304 225h8v8h-8zM392 225h8v8h-8zM432 225h8v8h-8zM448 225h8v8h-8zM544 225h16v8h-16zM312 265h8v8h-8zM128 353h8v8h-8zM192 353h8v8h-8zM224 353h8v8h-8zM272 353h8v8h-8zM360 353h8v8h-8zM176 409h8v8h-8zM224 409h8v8h-8zM360 409h16v8h-16zM424 449h8v8h-8zM128 457h8v8h-8zM152 457h8v8h-8zM400 457h8v8h-8zM200 537h8v8h-8zM192 585h8v8h-8zM368 585h8v8h-8zM432 585h16v8h-16zM496 585h8v8h-8zM400 593h16v8h-16zM464 593h8v8h-8zM200 721h16v8h-16zM128 729h8v8h-8zM128 777h8v8h-8z"/>
<path fill="#cce0f4" d="M192 217h8v8h-8zM336 217h8v8h-8zM224 225h8v8h-8zM368 225h8v8h-8zM520 225h8v8h-8zM280 265h8v8h-8zM264 313h16v8h-16zM144 361h8v8h-8zM200 401h8v8h-8zM240 401h8v8h-8zM336 401h16v8h-16zM232 409h8v8h-8zM408 409h8v8h-8zM304 449h8v8h-8zM136 497h8v8h-8zM200 497h8v8h-8zM144 545h8v8h-8zM216 585h8v8h-8zM312 585h8v8h-8zM344 585h8v8h-8zM384 585h8v8h-8zM224 593h8v8h-8zM304 593h8v8h-8zM328 681h8v8h-8z"/>
<path fill="#ccdcf4" d="M208 217h8v8h-8zM232 217h8v8h-8zM248 217h8v8h-8zM464 217h8v8h-8zM128 265h8v8h-8zM168 361h8v8h-8zM144 409h8v8h-8zM168 497h8v8h-8zM248 497h8v8h-8zM112 545h8v8h-8zM152 545h8v8h-8zM272 545h8v8h-8zM336 545h8v8h-8zM272 585h8v8h-8zM352 585h8v8h-8zM288 593h8v8h-8zM456 593h8v8h-8zM240 681h8v8h-8zM184 729h8v8h-8zM336 729h8v8h-8zM112 777h8v8h-8z"/>
<path fill="#c8dcf4" d="M224 217h8v8h-8zM368 217h8v8h-8zM520 217h8v8h-8zM136 225h8v8h-8zM272 225h8v8h-8zM312 225h8v8h-8zM416 225h8v8h-8zM488 225h8v8h-8zM528 225h8v8h-8zM568 225h8v8h-8zM160 265h8v8h-8zM296 265h8v8h-8zM216 313h8v8h-8zM200 361h8v8h-8zM144 401h8v8h-8zM232 401h8v8h-8zM408 401h8v8h-8zM264 409h8v8h-8zM312 409h8v8h-8zM376 409h8v8h-8zM416 409h8v8h-8zM432 409h8v8h-8zM448 409h8v8h-8zM160 449h16v8h-16zM208 449h8v8h-8zM224 449h8v8h-8zM288 449h8v8h-8zM144 497h8v8h-8zM208 497h8v8h-8zM264 497h8v8h-8zM328 497h8v8h-8zM176 545h8v8h-8zM304 545h16v8h-16zM352 545h8v8h-8zM224 585h8v8h-8zM288 585h8v8h-8zM304 585h8v8h-8zM456 585h8v8h-8zM120 593h16v8h-16zM168 593h16v8h-16zM248 593h8v8h-8zM144 633h24v8h-24zM336 681h8v8h-8zM160 729h8v8h-8zM224 729h8v8h-8zM344 729h8v8h-8z"/>
<path fill="#f4f8fc" d="M256 217h8v8h-8zM256 225h8v8h-8zM264 305h8v8h-8zM320 305h8v8h-8zM192 457h8v8h-8zM464 457h8v8h-8zM136 489h8v8h-8zM288 489h8v8h-8zM112 673h8v8h-8zM176 673h8v8h-8zM256 673h8v8h-8zM328 673h8v8h-8zM152 721h8v8h-8zM152 777h8v8h-8z"/>
<path fill="#c0d8f4" d="M272 217h8v8h-8zM112 265h8v8h-8zM144 265h8v8h-8zM232 313h8v8h-8zM288 313h8v8h-8zM152 361h8v8h-8zM264 361h8v8h-8zM296 401h8v8h-8zM400 401h8v8h-8zM432 401h8v8h-8zM448 401h8v8h-8zM112 449h8v8h-8zM200 449h8v8h-8zM232 449h8v8h-8zM336 449h8v8h-8zM160 545h8v8h-8zM160 585h8v8h-8zM176 585h8v8h-8zM144 681h8v8h-8zM272 681h8v8h-8zM296 681h16v8h-16z"/>
<path fill="#d4e4f8" d="M280 217h8v8h-8zM304 217h8v8h-8zM432 217h8v8h-8zM120 225h8v8h-8zM328 225h8v8h-8zM304 265h8v8h-8zM136 361h8v8h-8zM288 401h8v8h-8zM368 401h8v8h-8zM112 409h8v8h-8zM160 409h8v8h-8zM328 409h8v8h-8zM184 449h8v8h-8zM440 449h8v8h-8zM184 537h8v8h-8zM208 537h8v8h-8zM328 537h8v8h-8zM120 545h8v8h-8zM232 545h8v8h-8zM400 585h8v8h-8zM464 585h8v8h-8zM152 593h8v8h-8zM360 593h8v8h-8zM128 633h8v8h-8zM248 729h8v8h-8z"/>
<path fill="#f0f4f8" d="M320 217h8v8h-8zM384 217h8v8h-8zM384 225h8v8h-8zM480 225h8v8h-8zM136 265h8v8h-8zM224 273h8v8h-8zM208 305h8v8h-8zM224 305h16v8h-16zM280 305h24v8h-24zM312 305h8v8h-8zM120 321h48v8h-48zM184 321h32v8h-32zM224 321h8v8h-8zM240 321h16v8h-16zM280 321h8v8h-8zM296 321h24v8h-24zM328 321h8v8h-8zM160 353h8v8h-8zM240 353h8v8h-8zM344 353h8v8h-8zM192 401h8v8h-8zM464 401h8v8h-8zM192 409h8v8h-8zM464 409h8v8h-8zM136 457h8v8h-8zM272 457h8v8h-8zM320 457h8v8h-8zM392 457h8v8h-8zM120 489h16v8h-16zM160 489h8v8h-8zM176 489h16v8h-16zM216 489h8v8h-8zM232 489h16v8h-16zM312 489h16v8h-16zM112 505h24v8h-24zM160 505h8v8h-8zM176 505h24v8h-24zM216 505h8v8h-8zM232 505h16v8h-16zM256 505h8v8h-8zM272 505h16v8h-16zM304 505h16v8h-16zM136 537h8v8h-8zM192 537h8v8h-8zM280 545h8v8h-8zM480 593h8v8h-8zM128 673h8v8h-8zM144 673h8v8h-8zM160 673h8v8h-8zM192 673h8v8h-8zM248 673h8v8h-8zM272 673h16v8h-16zM296 673h24v8h-24zM360 673h24v8h-24zM120 689h24v8h-24zM152 689h16v8h-16zM192 689h24v8h-24zM224 689h16v8h-16zM248 689h8v8h-8zM264 689h8v8h-8zM280 689h8v8h-8zM312 689h16v8h-16zM344 689h8v8h-8zM360 689h24v8h-24zM192 721h8v8h-8z"/>
<path fill="#d4e4f4" d="M328 217h8v8h-8zM392 217h8v8h-8zM448 217h8v8h-8zM544 217h16v8h-16zM176 225h8v8h-8zM376 225h8v8h-8zM456 225h8v8h-8zM248 265h8v8h-8zM264 265h16v8h-16zM112 353h8v8h-8zM336 361h8v8h-8zM368 361h8v8h-8zM176 401h8v8h-8zM224 401h8v8h-8zM360 401h8v8h-8zM168 409h8v8h-8zM208 409h8v8h-8zM456 409h8v8h-8zM216 449h8v8h-8zM248 449h8v8h-8zM280 449h8v8h-8zM408 585h8v8h-8zM112 593h8v8h-8zM320 593h8v8h-8zM424 593h8v8h-8zM504 593h8v8h-8zM240 729h8v8h-8zM264 729h16v8h-16zM304 729h8v8h-8zM128 769h8v8h-8z"/>
<path fill="#d8e8f8" d="M408 217h8v8h-8zM184 225h8v8h-8zM400 225h8v8h-8zM280 353h8v8h-8zM296 353h8v8h-8zM304 401h8v8h-8zM384 401h8v8h-8zM288 409h8v8h-8zM432 457h8v8h-8zM240 537h8v8h-8zM256 537h8v8h-8zM320 537h8v8h-8zM208 585h8v8h-8zM192 593h8v8h-8zM440 593h8v8h-8zM112 721h8v8h-8zM120 769h8v8h-8zM136 769h16v8h-16z"/>
<path fill="#ecf4f8" d="M480 217h8v8h-8zM152 225h8v8h-8zM536 225h8v8h-8zM120 305h8v8h-8zM136 305h32v8h-32zM184 305h8v8h-8zM200 305h8v8h-8zM240 305h16v8h-16zM464 449h8v8h-8zM112 489h8v8h-8zM256 489h8v8h-8zM480 585h8v8h-8zM376 593h8v8h-8zM120 673h8v8h-8zM152 673h8v8h-8zM232 673h8v8h-8zM320 673h8v8h-8zM344 673h8v8h-8zM288 681h8v8h-8z"/>
<path fill="#b8c4f0" d="M96 225h8v8h-8zM96 409h8v8h-8zM96 593h8v8h-8zM96 777h8v8h-8z"/>
<path fill="#e0ecf8" d="M128 225h8v8h-8zM200 225h8v8h-8zM240 225h8v8h-8zM264 225h8v8h-8zM344 225h16v8h-16zM512 225h8v8h-8zM224 265h8v8h-8zM120 273h8v8h-8zM152 273h8v8h-8zM192 273h8v8h-8zM256 273h8v8h-8zM176 353h8v8h-8zM208 353h8v8h-8zM232 353h8v8h-8zM240 361h8v8h-8zM216 409h8v8h-8zM248 409h8v8h-8zM440 409h8v8h-8zM272 449h8v8h-8zM392 449h8v8h-8zM144 457h8v8h-8zM312 457h8v8h-8zM224 497h8v8h-8zM176 537h8v8h-8zM248 537h8v8h-8zM296 537h8v8h-8zM144 593h8v8h-8zM256 593h8v8h-8zM280 593h8v8h-8zM336 593h8v8h-8zM472 593h8v8h-8zM136 641h8v8h-8zM168 681h8v8h-8zM160 721h8v8h-8zM216 721h16v8h-16zM280 721h8v8h-8zM328 721h8v8h-8z"/>
<path fill="#e0e8f8" d="M144 225h8v8h-8zM168 225h8v8h-8zM424 225h8v8h-8zM472 225h8v8h-8zM200 273h8v8h-8zM152 353h8v8h-8zM264 353h8v8h-8zM216 401h8v8h-8zM184 409h8v8h-8zM280 409h8v8h-8zM424 409h8v8h-8zM160 537h8v8h-8zM144 585h8v8h-8zM256 585h8v8h-8zM280 585h8v8h-8zM472 585h8v8h-8zM200 593h8v8h-8zM240 593h8v8h-8zM488 593h8v8h-8zM120 641h8v8h-8z"/>
<path fill="#f4f4f8" d="M320 225h8v8h-8zM136 257h8v8h-8zM224 257h8v8h-8zM112 305h8v8h-8zM168 305h8v8h-8zM216 305h8v8h-8zM112 321h8v8h-8zM168 321h8v8h-8zM216 321h8v8h-8zM232 321h8v8h-8zM264 321h16v8h-16zM288 321h8v8h-8zM320 321h8v8h-8zM136 441h8v8h-8zM192 441h8v8h-8zM272 441h8v8h-8zM320 441h8v8h-8zM392 441h8v8h-8zM464 441h8v8h-8zM144 489h8v8h-8zM208 489h8v8h-8zM264 489h8v8h-8zM328 489h8v8h-8zM136 505h16v8h-16zM168 505h8v8h-8zM200 505h16v8h-16zM248 505h8v8h-8zM264 505h8v8h-8zM288 505h8v8h-8zM320 505h16v8h-16zM184 673h8v8h-8zM336 673h8v8h-8zM112 689h8v8h-8zM144 689h8v8h-8zM176 689h16v8h-16zM240 689h8v8h-8zM256 689h8v8h-8zM272 689h8v8h-8zM296 689h16v8h-16zM328 689h16v8h-16zM256 721h8v8h-8z"/>
<path fill="#d4e0f4" d="M504 225h8v8h-8zM120 409h8v8h-8zM384 449h8v8h-8zM160 777h8v8h-8z"/>
<path fill="#ececec" d="M88 233h8v8h-8zM152 345h8v8h-8zM184 345h8v8h-8zM208 345h16v8h-16zM232 345h8v8h-8zM272 345h8v8h-8zM304 345h16v8h-16zM352 345h224v8h-224zM88 369h8v8h-8zM88 393h8v8h-8zM88 417h8v8h-8zM360 465h216v8h-216zM112 529h16v8h-16zM144 529h8v8h-8zM160 529h8v8h-8zM200 529h8v8h-8zM248 529h8v8h-8zM264 529h8v8h-8zM288 529h16v8h-16zM336 529h8v8h-8zM368 529h208v8h-208zM88 553h8v8h-8zM88 577h8v8h-8zM88 601h8v8h-8zM344 649h232v8h-232zM144 713h8v8h-8zM176 713h24v8h-24zM224 713h8v8h-8zM256 713h40v8h-40zM328 713h8v8h-8zM352 713h8v8h-8zM368 713h16v8h-16zM392 713h8v8h-8zM424 713h16v8h-16zM472 713h104v8h-104zM88 737h8v8h-8zM88 761h8v8h-8z"/>
<path fill="#e4e4f0" d="M96 233h8v8h-8zM96 417h8v8h-8zM96 601h8v8h-8z"/>
<path fill="#ececf0" d="M104 233h8v8h-8zM96 393h8v8h-8zM104 417h8v8h-8zM96 577h8v8h-8zM104 601h8v8h-8zM96 761h8v8h-8z"/>
<path fill="#e4e4e4" d="M88 241h8v8h-8zM88 249h8v8h-8zM88 329h8v8h-8zM88 337h8v8h-8zM88 377h8v8h-8zM88 385h8v8h-8zM88 425h8v8h-8zM88 433h8v8h-8zM88 473h8v8h-8zM88 481h8v8h-8zM88 513h8v8h-8zM88 521h8v8h-8zM88 561h8v8h-8zM88 569h8v8h-8zM88 609h8v8h-8zM88 617h8v8h-8zM88 657h8v8h-8zM88 665h8v8h-8zM136 665h8v8h-8zM240 665h8v8h-8zM88 697h8v8h-8zM88 705h8v8h-8zM88 745h8v8h-8zM88 753h8v8h-8z"/>
<path fill="#8898e4" d="M96 241h8v8h-8zM96 425h8v8h-8zM96 609h8v8h-8z"/>
<path fill="#d4d8e8" d="M104 241h8v8h-8zM104 337h8v8h-8zM104 385h8v8h-8zM104 425h8v8h-8zM104 473h8v8h-8zM104 521h8v8h-8zM104 569h8v8h-8zM104 609h8v8h-8zM104 705h8v8h-8zM104 753h8v8h-8z"/>
<path fill="#acc4e4" d="M112 241h8v8h-8zM304 241h8v8h-8zM240 337h8v8h-8zM296 337h8v8h-8zM240 385h16v8h-16zM344 385h8v8h-8zM376 385h8v8h-8zM144 425h8v8h-8zM376 425h8v8h-8zM416 425h8v8h-8zM120 473h8v8h-8zM384 569h8v8h-8zM200 609h8v8h-8zM248 705h8v8h-8zM304 705h8v8h-8zM168 753h8v8h-8z"/>
<path fill="#a8c4e4" d="M120 241h8v8h-8zM184 241h8v8h-8zM200 241h8v8h-8zM296 241h8v8h-8zM312 241h8v8h-8zM344 241h16v8h-16zM112 337h8v8h-8zM256 337h16v8h-16zM280 337h8v8h-8zM328 337h8v8h-8zM296 425h8v8h-8zM432 425h8v8h-8zM448 425h8v8h-8zM160 473h8v8h-8zM208 473h8v8h-8zM264 473h8v8h-8zM320 473h8v8h-8zM216 521h8v8h-8zM168 569h8v8h-8zM256 609h8v8h-8zM272 609h8v8h-8zM216 705h8v8h-8zM344 705h8v8h-8z"/>
<path fill="#b8cce4" d="M128 241h8v8h-8zM224 241h8v8h-8zM168 337h8v8h-8zM160 385h8v8h-8zM112 425h8v8h-8zM160 425h16v8h-16zM344 425h16v8h-16zM152 521h8v8h-8zM312 521h8v8h-8zM304 569h8v8h-8zM168 609h8v8h-8zM264 609h8v8h-8zM240 705h8v8h-8zM312 705h8v8h-8zM120 753h8v8h-8zM208 753h8v8h-8zM264 753h8v8h-8z"/>
<path fill="#d8dce8" d="M136 241h8v8h-8zM144 329h8v8h-8zM232 481h8v8h-8zM176 513h8v8h-8z"/>
<path fill="#b0c8e4" d="M144 241h8v8h-8zM168 241h8v8h-8zM248 241h8v8h-8zM376 241h8v8h-8zM144 337h8v8h-8zM192 337h8v8h-8zM248 337h8v8h-8zM200 385h8v8h-8zM336 385h8v8h-8zM232 425h8v8h-8zM312 425h8v8h-8zM184 473h8v8h-8zM216 473h8v8h-8zM248 473h8v8h-8zM328 473h8v8h-8zM176 521h8v8h-8zM144 569h8v8h-8zM336 569h16v8h-16zM392 569h8v8h-8zM144 609h8v8h-8zM160 609h8v8h-8zM352 609h8v8h-8zM360 705h8v8h-8zM400 705h8v8h-8zM464 705h8v8h-8zM248 753h8v8h-8z"/>
<path fill="#c0d0e8" d="M152 241h8v8h-8zM240 241h8v8h-8zM320 241h8v8h-8zM120 249h8v8h-8zM184 249h8v8h-8zM200 249h8v8h-8zM296 249h8v8h-8zM344 249h16v8h-16zM208 337h8v8h-8zM304 337h8v8h-8zM200 377h8v8h-8zM336 377h8v8h-8zM288 385h8v8h-8zM320 385h8v8h-8zM224 425h8v8h-8zM304 425h8v8h-8zM328 425h8v8h-8zM368 425h8v8h-8zM384 425h8v8h-8zM256 433h8v8h-8zM296 433h8v8h-8zM400 433h8v8h-8zM432 433h8v8h-8zM448 433h8v8h-8zM144 473h8v8h-8zM296 473h8v8h-8zM344 473h8v8h-8zM112 521h16v8h-16zM160 521h8v8h-8zM288 521h8v8h-8zM144 561h8v8h-8zM248 561h8v8h-8zM288 561h8v8h-8zM336 561h8v8h-8zM208 569h8v8h-8zM312 569h8v8h-8zM368 569h8v8h-8zM112 609h8v8h-8zM192 609h8v8h-8zM208 609h8v8h-8zM360 609h8v8h-8zM184 617h8v8h-8zM256 617h8v8h-8zM272 617h8v8h-8zM312 617h8v8h-8zM184 705h8v8h-8zM224 705h8v8h-8zM288 705h8v8h-8zM352 705h8v8h-8zM248 745h8v8h-8zM112 753h8v8h-8zM128 753h8v8h-8zM152 753h16v8h-16zM256 753h8v8h-8z"/>
<path fill="#b4cce4" d="M160 241h8v8h-8zM288 241h8v8h-8zM288 337h8v8h-8zM184 385h8v8h-8zM352 385h8v8h-8zM200 425h8v8h-8zM408 425h8v8h-8zM456 425h8v8h-8zM176 473h8v8h-8zM168 521h8v8h-8zM320 521h8v8h-8zM344 521h8v8h-8zM120 569h8v8h-8zM320 569h8v8h-8zM408 705h8v8h-8zM448 705h8v8h-8zM144 753h8v8h-8z"/>
<path fill="#d8e0e8" d="M176 241h8v8h-8zM168 329h8v8h-8zM192 329h8v8h-8zM248 329h8v8h-8zM288 329h8v8h-8zM120 481h8v8h-8zM160 481h8v8h-8zM208 481h16v8h-16zM240 481h32v8h-32zM280 481h8v8h-8zM320 481h8v8h-8zM136 513h8v8h-8zM152 513h8v8h-8zM168 513h8v8h-8zM192 513h8v8h-8zM224 513h8v8h-8zM240 513h8v8h-8zM312 513h24v8h-24zM344 513h24v8h-24zM144 521h8v8h-8zM248 521h8v8h-8zM360 561h8v8h-8zM240 569h8v8h-8zM136 697h8v8h-8zM152 697h8v8h-8zM240 697h8v8h-8zM272 697h16v8h-16zM312 697h16v8h-16zM360 697h8v8h-8zM392 697h24v8h-24zM424 697h8v8h-8zM448 697h8v8h-8zM464 697h8v8h-8zM192 705h8v8h-8zM256 705h8v8h-8z"/>
<path fill="#bcd0e8" d="M192 241h8v8h-8zM208 241h8v8h-8zM256 241h8v8h-8zM336 241h8v8h-8zM152 337h8v8h-8zM216 337h8v8h-8zM232 377h32v8h-32zM344 377h8v8h-8zM368 377h8v8h-8zM136 385h8v8h-8zM152 385h8v8h-8zM272 385h16v8h-16zM304 385h8v8h-8zM176 425h8v8h-8zM208 425h8v8h-8zM360 425h8v8h-8zM128 433h8v8h-8zM152 433h8v8h-8zM200 521h8v8h-8zM344 561h8v8h-8zM384 561h24v8h-24zM176 569h8v8h-8zM256 569h16v8h-16zM376 569h8v8h-8zM128 609h8v8h-8zM176 705h8v8h-8zM264 705h8v8h-8zM168 745h8v8h-8zM176 753h8v8h-8z"/>
<path fill="#b4c8e4" d="M216 241h8v8h-8zM240 425h8v8h-8zM192 521h8v8h-8zM224 521h8v8h-8zM240 521h8v8h-8zM328 521h8v8h-8zM352 521h8v8h-8zM248 569h8v8h-8zM288 569h8v8h-8zM240 609h16v8h-16zM288 609h8v8h-8zM152 705h8v8h-8zM320 705h8v8h-8z"/>
<path fill="#c0d4e8" d="M232 241h8v8h-8zM312 249h8v8h-8zM184 377h8v8h-8zM272 473h8v8h-8zM216 609h8v8h-8z"/>
<path fill="#d4dce8" d="M264 241h8v8h-8zM272 249h8v8h-8zM368 249h8v8h-8zM112 329h8v8h-8zM128 329h16v8h-16zM160 329h8v8h-8zM176 329h8v8h-8zM200 329h8v8h-8zM240 329h8v8h-8zM256 329h16v8h-16zM280 329h8v8h-8zM296 329h8v8h-8zM328 329h16v8h-16zM272 337h8v8h-8zM120 377h8v8h-8zM136 425h8v8h-8zM272 425h8v8h-8zM320 425h8v8h-8zM184 433h8v8h-8zM216 433h8v8h-8zM248 433h8v8h-8zM280 433h8v8h-8zM424 433h8v8h-8zM440 433h8v8h-8zM136 473h8v8h-8zM112 481h8v8h-8zM128 481h8v8h-8zM168 481h8v8h-8zM336 481h8v8h-8zM352 481h8v8h-8zM128 513h8v8h-8zM216 513h8v8h-8zM232 513h8v8h-8zM272 513h8v8h-8zM408 561h8v8h-8zM360 569h8v8h-8zM224 609h8v8h-8zM296 609h8v8h-8zM120 617h8v8h-8zM232 617h8v8h-8zM280 617h8v8h-8zM320 617h16v8h-16zM368 617h16v8h-16zM200 697h8v8h-8zM216 697h8v8h-8zM248 697h8v8h-8zM304 697h8v8h-8zM336 697h16v8h-16zM232 745h8v8h-8z"/>
<path fill="#c8d4e8" d="M272 241h8v8h-8zM160 249h16v8h-16zM216 249h8v8h-8zM376 249h8v8h-8zM136 377h8v8h-8zM152 377h8v8h-8zM168 377h16v8h-16zM208 377h8v8h-8zM224 377h8v8h-8zM272 377h8v8h-8zM304 377h8v8h-8zM328 385h8v8h-8zM216 425h8v8h-8zM248 425h8v8h-8zM280 425h8v8h-8zM240 433h8v8h-8zM136 561h8v8h-8zM176 561h8v8h-8zM272 561h8v8h-8zM296 561h8v8h-8zM328 561h8v8h-8zM376 561h8v8h-8zM112 569h8v8h-8zM184 569h8v8h-8zM232 609h8v8h-8zM280 609h8v8h-8zM328 609h8v8h-8zM376 609h8v8h-8zM144 617h8v8h-8zM240 617h16v8h-16zM288 617h8v8h-8zM176 745h8v8h-8zM184 753h16v8h-16zM224 753h8v8h-8zM240 753h8v8h-8z"/>
<path fill="#b8cce8" d="M280 241h8v8h-8zM288 473h8v8h-8zM136 521h8v8h-8zM360 521h8v8h-8zM152 569h8v8h-8zM328 569h8v8h-8zM344 609h8v8h-8zM136 705h8v8h-8zM272 705h8v8h-8z"/>
<path fill="#bccce8" d="M328 241h8v8h-8zM376 377h8v8h-8zM168 385h16v8h-16zM208 385h8v8h-8zM224 385h8v8h-8zM120 425h8v8h-8zM336 425h8v8h-8zM312 473h8v8h-8zM168 561h8v8h-8zM136 569h8v8h-8zM272 569h8v8h-8zM296 569h8v8h-8zM136 609h8v8h-8zM280 705h8v8h-8zM392 705h8v8h-8zM424 705h8v8h-8z"/>
<path fill="#e0e4e8" d="M360 241h8v8h-8zM176 249h8v8h-8zM184 329h8v8h-8zM272 329h8v8h-8zM192 377h8v8h-8zM296 377h8v8h-8zM360 377h8v8h-8zM144 385h8v8h-8zM192 433h8v8h-8zM464 433h8v8h-8zM168 465h8v8h-8zM352 465h8v8h-8zM200 473h8v8h-8zM144 481h16v8h-16zM192 481h8v8h-8zM224 481h8v8h-8zM272 481h8v8h-8zM296 481h8v8h-8zM344 481h8v8h-8zM296 513h8v8h-8zM336 513h8v8h-8zM160 561h8v8h-8zM280 561h8v8h-8zM336 609h8v8h-8zM152 617h8v8h-8zM328 697h8v8h-8zM432 705h8v8h-8zM136 745h8v8h-8zM216 745h8v8h-8z"/>
<path fill="#c4d4e8" d="M368 241h8v8h-8zM112 249h8v8h-8zM144 249h8v8h-8zM248 249h8v8h-8zM304 249h8v8h-8zM232 337h8v8h-8zM312 337h8v8h-8zM160 377h8v8h-8zM352 377h8v8h-8zM112 385h8v8h-8zM216 385h8v8h-8zM264 385h8v8h-8zM312 385h8v8h-8zM384 385h8v8h-8zM184 425h8v8h-8zM288 425h8v8h-8zM424 425h8v8h-8zM144 433h8v8h-8zM232 433h8v8h-8zM264 433h8v8h-8zM312 433h8v8h-8zM376 433h8v8h-8zM416 433h8v8h-8zM152 473h8v8h-8zM192 473h8v8h-8zM224 473h8v8h-8zM264 521h8v8h-8zM120 561h8v8h-8zM152 561h8v8h-8zM304 561h8v8h-8zM320 561h8v8h-8zM192 569h8v8h-8zM224 569h16v8h-16zM176 609h8v8h-8zM304 609h8v8h-8zM320 609h8v8h-8zM368 609h8v8h-8zM384 609h16v8h-16zM160 617h8v8h-8zM200 617h8v8h-8zM352 617h8v8h-8zM368 705h16v8h-16zM120 745h8v8h-8zM144 745h8v8h-8zM208 745h8v8h-8zM264 745h8v8h-8z"/>
<path fill="#e8e8e8" d="M384 241h192v8h-192zM384 249h192v8h-192zM352 329h224v8h-224zM352 337h224v8h-224zM88 345h8v8h-8zM392 377h184v8h-184zM392 385h184v8h-184zM472 425h104v8h-104zM472 433h104v8h-104zM88 465h8v8h-8zM360 473h216v8h-216zM360 481h216v8h-216zM368 513h208v8h-208zM368 521h208v8h-208zM88 529h8v8h-8zM416 561h160v8h-160zM416 569h160v8h-160zM400 609h176v8h-176zM400 617h176v8h-176zM88 649h8v8h-8zM112 649h16v8h-16zM136 649h8v8h-8zM192 649h8v8h-8zM240 649h8v8h-8zM280 649h16v8h-16zM344 657h232v8h-232zM344 665h232v8h-232zM472 697h104v8h-104zM472 705h104v8h-104zM88 713h8v8h-8zM272 745h304v8h-304zM272 753h304v8h-304z"/>
<path fill="#bcc4e8" d="M96 249h8v8h-8zM96 433h8v8h-8zM96 617h8v8h-8z"/>
<path fill="#d8d8e8" d="M104 249h8v8h-8zM104 377h8v8h-8zM104 433h8v8h-8zM104 561h8v8h-8zM104 617h8v8h-8zM104 745h8v8h-8z"/>
<path fill="#ccd8e8" d="M128 249h8v8h-8zM192 249h8v8h-8zM208 249h8v8h-8zM224 249h8v8h-8zM256 249h8v8h-8zM280 249h8v8h-8zM328 249h16v8h-16zM216 377h8v8h-8zM320 377h8v8h-8zM384 377h8v8h-8zM120 385h8v8h-8zM440 425h8v8h-8zM112 433h16v8h-16zM160 433h16v8h-16zM208 433h8v8h-8zM336 433h8v8h-8zM360 433h8v8h-8zM336 521h8v8h-8zM208 561h8v8h-8zM224 561h16v8h-16zM312 561h8v8h-8zM408 569h8v8h-8zM128 617h16v8h-16zM168 617h8v8h-8zM264 617h8v8h-8zM344 617h8v8h-8zM328 705h8v8h-8zM112 745h8v8h-8zM128 745h8v8h-8zM232 753h8v8h-8z"/>
<path fill="#dce0e8" d="M136 249h8v8h-8zM264 249h8v8h-8zM104 329h8v8h-8zM152 329h8v8h-8zM208 329h16v8h-16zM232 329h8v8h-8zM304 329h16v8h-16zM192 385h8v8h-8zM296 385h8v8h-8zM360 385h8v8h-8zM192 425h8v8h-8zM464 425h8v8h-8zM136 433h8v8h-8zM272 433h8v8h-8zM320 433h8v8h-8zM392 433h8v8h-8zM304 473h8v8h-8zM104 481h8v8h-8zM176 481h16v8h-16zM288 481h8v8h-8zM312 481h8v8h-8zM328 481h8v8h-8zM104 513h24v8h-24zM160 513h8v8h-8zM200 513h8v8h-8zM264 513h8v8h-8zM288 513h8v8h-8zM240 561h8v8h-8zM160 569h8v8h-8zM280 569h8v8h-8zM152 609h8v8h-8zM224 617h8v8h-8zM296 617h8v8h-8zM104 697h8v8h-8zM176 697h16v8h-16zM224 697h8v8h-8zM264 697h8v8h-8zM288 697h8v8h-8zM352 697h8v8h-8zM368 697h16v8h-16zM136 753h8v8h-8zM216 753h8v8h-8z"/>
<path fill="#d0d8e8" d="M152 249h8v8h-8zM240 249h8v8h-8zM320 249h8v8h-8zM224 329h8v8h-8zM184 337h8v8h-8zM112 377h8v8h-8zM264 377h8v8h-8zM312 377h8v8h-8zM176 433h8v8h-8zM328 433h8v8h-8zM368 433h8v8h-8zM384 433h8v8h-8zM296 521h8v8h-8zM192 561h8v8h-8zM192 617h8v8h-8zM360 617h8v8h-8zM112 697h8v8h-8zM128 697h8v8h-8zM160 697h16v8h-16zM184 745h8v8h-8z"/>
<path fill="#d0dce8" d="M232 249h8v8h-8zM120 329h8v8h-8zM320 329h8v8h-8zM344 329h8v8h-8zM128 377h8v8h-8zM328 377h8v8h-8zM392 425h8v8h-8zM224 433h8v8h-8zM288 433h8v8h-8zM304 433h8v8h-8zM184 513h8v8h-8zM208 513h8v8h-8zM256 513h8v8h-8zM280 513h8v8h-8zM304 513h8v8h-8zM112 561h8v8h-8zM128 561h8v8h-8zM184 561h8v8h-8zM200 561h8v8h-8zM216 561h8v8h-8zM352 561h8v8h-8zM112 617h8v8h-8zM176 617h8v8h-8zM208 617h16v8h-16zM304 617h8v8h-8zM384 617h16v8h-16zM120 697h8v8h-8zM208 697h8v8h-8zM232 697h8v8h-8zM296 697h8v8h-8zM384 697h8v8h-8zM416 697h8v8h-8zM440 697h8v8h-8zM456 697h8v8h-8zM192 745h16v8h-16zM224 745h8v8h-8zM240 745h8v8h-8z"/>
<path fill="#c8d8e8" d="M288 249h8v8h-8zM280 377h16v8h-16zM128 385h8v8h-8zM200 433h8v8h-8zM344 433h16v8h-16zM408 433h8v8h-8zM456 433h8v8h-8zM256 561h16v8h-16zM368 561h8v8h-8zM128 569h8v8h-8zM200 569h8v8h-8zM216 569h8v8h-8zM352 569h8v8h-8zM120 609h8v8h-8zM152 745h16v8h-16zM256 745h8v8h-8zM200 753h8v8h-8z"/>
<path fill="#e4e4e8" d="M360 249h8v8h-8zM144 377h8v8h-8zM136 481h8v8h-8zM144 513h8v8h-8zM248 513h8v8h-8zM336 617h8v8h-8zM192 697h8v8h-8zM256 697h8v8h-8z"/>
<path fill="#dce0f0" d="M96 257h8v8h-8zM96 441h8v8h-8zM96 625h8v8h-8z"/>
<path fill="#f0f0f4" d="M104 257h8v8h-8zM104 369h8v8h-8zM104 441h8v8h-8zM104 553h8v8h-8zM104 625h8v8h-8zM104 737h8v8h-8z"/>
<path fill="#f0f4f4" d="M176 257h16v8h-16zM200 257h8v8h-8zM216 257h8v8h-8zM128 441h8v8h-8zM152 441h8v8h-8zM256 441h16v8h-16zM296 441h8v8h-8zM376 441h8v8h-8zM400 441h24v8h-24zM432 441h8v8h-8zM448 441h8v8h-8zM112 625h16v8h-16z"/>
<path fill="#f8f8f8" d="M328 257h248v8h-248zM176 321h8v8h-8zM256 321h8v8h-8zM336 321h240v8h-240zM472 441h104v8h-104zM152 505h8v8h-8zM296 505h8v8h-8zM336 505h240v8h-240zM176 625h400v8h-400zM216 689h8v8h-8zM288 689h8v8h-8zM352 689h8v8h-8zM384 689h192v8h-192zM96 785h480v8h-480z"/>
<path fill="#94a4ec" d="M96 265h8v8h-8zM96 449h8v8h-8zM96 633h8v8h-8z"/>
<path fill="#bcd4f4" d="M120 265h8v8h-8zM152 265h8v8h-8zM256 265h8v8h-8zM216 361h8v8h-8zM288 361h8v8h-8zM320 361h8v8h-8zM128 401h8v8h-8zM152 401h8v8h-8zM256 401h8v8h-8zM312 497h8v8h-8zM264 545h8v8h-8zM184 585h8v8h-8zM392 585h8v8h-8zM136 729h8v8h-8zM232 729h8v8h-8zM296 729h8v8h-8z"/>
<path fill="#b0ccf0" d="M176 265h8v8h-8zM216 265h8v8h-8zM312 313h8v8h-8zM128 361h8v8h-8zM192 361h8v8h-8zM224 361h8v8h-8zM272 361h8v8h-8zM256 449h8v8h-8zM120 497h16v8h-16zM160 497h8v8h-8zM200 545h8v8h-8zM360 681h8v8h-8z"/>
<path fill="#acccf0" d="M184 265h8v8h-8zM184 313h8v8h-8zM248 313h8v8h-8zM416 449h8v8h-8zM184 545h8v8h-8zM208 545h8v8h-8zM328 545h8v8h-8zM112 633h8v8h-8zM128 681h8v8h-8zM152 681h8v8h-8zM280 681h8v8h-8z"/>
<path fill="#b8d4f4" d="M192 265h8v8h-8zM208 313h8v8h-8zM280 313h8v8h-8zM144 449h8v8h-8zM312 449h8v8h-8zM232 497h16v8h-16zM128 545h8v8h-8zM344 545h8v8h-8zM136 633h8v8h-8zM192 681h8v8h-8zM120 729h8v8h-8z"/>
<path fill="#b8d0f4" d="M200 265h8v8h-8zM296 313h8v8h-8zM176 497h16v8h-16zM216 497h8v8h-8zM224 545h8v8h-8zM240 545h8v8h-8zM320 545h8v8h-8zM248 681h8v8h-8zM368 681h8v8h-8zM144 729h8v8h-8zM320 729h8v8h-8z"/>
<path fill="#c4dcf4" d="M232 265h16v8h-16zM112 313h8v8h-8zM168 313h8v8h-8zM120 449h8v8h-8zM328 449h8v8h-8zM344 449h24v8h-24zM456 449h8v8h-8zM280 729h8v8h-8zM112 769h8v8h-8z"/>
<path fill="#d0d4f4" d="M96 273h8v8h-8zM96 457h8v8h-8zM96 641h8v8h-8z"/>
<path fill="#ececf8" d="M104 273h8v8h-8zM104 353h8v8h-8zM104 457h8v8h-8zM104 537h8v8h-8zM104 641h8v8h-8zM104 721h8v8h-8z"/>
<path fill="#e4ecf8" d="M112 273h8v8h-8zM144 273h8v8h-8zM208 273h8v8h-8zM232 273h16v8h-16zM296 273h8v8h-8zM176 313h8v8h-8zM120 353h8v8h-8zM144 353h8v8h-8zM168 353h8v8h-8zM200 353h8v8h-8zM160 361h8v8h-8zM344 361h8v8h-8zM136 449h8v8h-8zM320 449h8v8h-8zM112 457h16v8h-16zM168 457h16v8h-16zM200 457h16v8h-16zM224 457h24v8h-24zM328 457h40v8h-40zM456 457h8v8h-8zM112 537h8v8h-8zM144 537h16v8h-16zM168 537h8v8h-8zM272 537h8v8h-8zM304 537h16v8h-16zM336 537h8v8h-8zM352 537h8v8h-8zM192 545h8v8h-8zM144 641h24v8h-24zM176 721h16v8h-16zM336 721h16v8h-16z"/>
<path fill="#e8f0f8" d="M128 273h8v8h-8zM160 273h16v8h-16zM280 273h16v8h-16zM320 273h8v8h-8zM256 313h8v8h-8zM336 313h8v8h-8zM136 353h8v8h-8zM184 353h8v8h-8zM248 353h16v8h-16zM304 353h16v8h-16zM328 353h16v8h-16zM368 353h8v8h-8zM136 401h8v8h-8zM272 401h8v8h-8zM320 401h8v8h-8zM392 401h8v8h-8zM272 409h8v8h-8zM392 409h8v8h-8zM288 457h8v8h-8zM304 457h8v8h-8zM368 457h8v8h-8zM384 457h8v8h-8zM296 497h8v8h-8zM120 537h8v8h-8zM232 537h8v8h-8zM288 537h8v8h-8zM136 545h8v8h-8zM136 585h8v8h-8zM232 585h8v8h-8zM328 585h8v8h-8zM416 585h8v8h-8zM136 593h8v8h-8zM232 593h8v8h-8zM168 641h8v8h-8zM216 681h8v8h-8zM128 721h8v8h-8zM168 721h8v8h-8zM240 721h16v8h-16zM264 721h16v8h-16zM304 721h16v8h-16zM192 729h8v8h-8zM256 729h8v8h-8z"/>
<path fill="#f8f8fc" d="M136 273h8v8h-8zM176 305h8v8h-8zM256 305h8v8h-8zM336 305h8v8h-8zM152 489h8v8h-8zM224 489h8v8h-8zM296 489h8v8h-8zM280 537h8v8h-8zM168 673h8v8h-8zM216 673h8v8h-8zM288 673h8v8h-8zM352 673h8v8h-8z"/>
<path fill="#84b0e4" d="M88 281h8v8h-8z"/>
<path fill="#5490e4" d="M96 281h8v8h-8z"/>
<path fill="#5494e4" d="M104 281h8v8h-8z"/>
<path fill="#5c98e8" d="M112 281h8v8h-8zM192 281h8v8h-8zM272 281h8v8h-8zM312 281h8v8h-8zM144 289h8v8h-8zM176 289h8v8h-8zM352 289h8v8h-8z"/>
<path fill="#5898e8" d="M120 281h8v8h-8zM144 281h48v8h-48zM200 281h16v8h-16zM232 281h40v8h-40zM280 281h24v8h-24zM320 281h56v8h-56zM128 289h8v8h-8zM216 289h8v8h-8z"/>
<path fill="#5894e8" d="M128 281h8v8h-8zM216 281h8v8h-8z"/>
<path fill="#5494e8" d="M136 281h8v8h-8zM224 281h8v8h-8zM304 281h8v8h-8zM376 281h200v8h-200z"/>
<path fill="#74a4e4" d="M88 289h8v8h-8zM88 297h8v8h-8z"/>
<path fill="#3c7ce0" d="M96 289h8v8h-8z"/>
<path fill="#3c80e4" d="M104 289h8v8h-8zM96 297h8v8h-8z"/>
<path fill="#78acec" d="M112 289h8v8h-8zM192 289h8v8h-8zM272 289h8v8h-8zM312 289h8v8h-8z"/>
<path fill="#6ca4e8" d="M120 289h8v8h-8z"/>
<path fill="#448ce4" d="M136 289h8v8h-8zM224 289h8v8h-8zM144 297h32v8h-32zM200 297h8v8h-8zM264 297h8v8h-8zM280 297h8v8h-8zM336 297h24v8h-24z"/>
<path fill="#609ce8" d="M152 289h8v8h-8zM336 289h8v8h-8z"/>
<path fill="#649ce8" d="M160 289h16v8h-16zM280 289h8v8h-8zM344 289h8v8h-8z"/>
<path fill="#74a8ec" d="M184 289h8v8h-8zM296 289h8v8h-8zM320 289h8v8h-8z"/>
<path fill="#68a0e8" d="M200 289h16v8h-16zM240 289h8v8h-8zM256 289h8v8h-8zM368 289h8v8h-8z"/>
<path fill="#70a4ec" d="M232 289h8v8h-8zM328 289h8v8h-8z"/>
<path fill="#6ca4ec" d="M248 289h8v8h-8zM288 289h8v8h-8z"/>
<path fill="#5c9ce8" d="M264 289h8v8h-8z"/>
<path fill="#4c90e4" d="M304 289h8v8h-8zM376 289h8v8h-8zM112 297h8v8h-8zM192 297h8v8h-8zM272 297h8v8h-8zM312 297h8v8h-8z"/>
<path fill="#70a8ec" d="M360 289h8v8h-8z"/>
<path fill="#3c84e4" d="M384 289h192v8h-192zM104 297h8v8h-8zM384 297h192v8h-192z"/>
<path fill="#488ce4" d="M120 297h8v8h-8zM184 297h8v8h-8zM208 297h8v8h-8zM232 297h32v8h-32zM288 297h8v8h-8zM320 297h16v8h-16zM360 297h16v8h-16z"/>
<path fill="#4488e4" d="M128 297h8v8h-8zM176 297h8v8h-8zM216 297h8v8h-8z"/>
<path fill="#3c88e4" d="M136 297h8v8h-8zM224 297h8v8h-8z"/>
<path fill="#4890e4" d="M296 297h8v8h-8z"/>
<path fill="#4088e4" d="M304 297h8v8h-8zM376 297h8v8h-8z"/>
<path fill="#c4ccf4" d="M96 305h8v8h-8zM96 489h8v8h-8zM96 673h8v8h-8z"/>
<path fill="#f0f0f8" d="M104 305h8v8h-8zM104 489h8v8h-8zM104 673h8v8h-8z"/>
<path fill="#f4f8f8" d="M272 305h8v8h-8zM168 489h8v8h-8zM200 489h8v8h-8zM248 489h8v8h-8zM224 505h8v8h-8zM240 673h8v8h-8zM168 689h8v8h-8zM152 769h8v8h-8z"/>
<path fill="#a0b0ec" d="M96 313h8v8h-8zM96 497h8v8h-8zM96 681h8v8h-8z"/>
<path fill="#a8c8f0" d="M120 313h8v8h-8zM144 313h16v8h-16zM200 313h8v8h-8zM240 313h8v8h-8zM152 449h8v8h-8zM400 449h8v8h-8zM112 497h8v8h-8zM232 681h8v8h-8zM320 681h8v8h-8z"/>
<path fill="#a0c0f0" d="M128 313h8v8h-8zM304 313h8v8h-8z"/>
<path fill="#a4c8f0" d="M136 313h8v8h-8z"/>
<path fill="#acc8f0" d="M160 313h8v8h-8zM112 361h8v8h-8zM432 449h8v8h-8zM120 681h8v8h-8zM344 681h8v8h-8z"/>
<path fill="#9cc0f0" d="M192 313h8v8h-8z"/>
<path fill="#b0d0f0" d="M224 313h8v8h-8z"/>
<path fill="#a4c4f0" d="M328 313h8v8h-8zM128 449h8v8h-8zM256 497h8v8h-8z"/>
<path fill="#dce0f4" d="M96 321h8v8h-8zM96 505h8v8h-8zM96 689h8v8h-8z"/>
<path fill="#acb8e8" d="M96 329h8v8h-8zM96 513h8v8h-8zM96 697h8v8h-8z"/>
<path fill="#a0ace4" d="M96 337h8v8h-8zM96 521h8v8h-8zM96 705h8v8h-8z"/>
<path fill="#9cbce4" d="M120 337h8v8h-8zM320 337h8v8h-8zM344 337h8v8h-8zM128 473h8v8h-8zM168 473h8v8h-8zM352 473h8v8h-8zM208 521h8v8h-8zM304 521h8v8h-8zM168 705h8v8h-8zM296 705h8v8h-8zM440 705h8v8h-8z"/>
<path fill="#a4c0e4" d="M128 337h16v8h-16zM160 337h8v8h-8zM200 337h8v8h-8zM256 425h8v8h-8zM400 425h8v8h-8zM240 473h8v8h-8zM280 473h8v8h-8zM128 521h8v8h-8zM232 521h8v8h-8zM272 521h8v8h-8zM184 609h8v8h-8zM312 609h8v8h-8zM200 705h8v8h-8z"/>
<path fill="#a0c0e4" d="M176 337h8v8h-8zM128 425h8v8h-8zM152 425h8v8h-8zM112 473h8v8h-8zM232 473h8v8h-8zM336 473h8v8h-8zM256 521h8v8h-8zM280 521h8v8h-8zM208 705h8v8h-8zM232 705h8v8h-8z"/>
<path fill="#98bce4" d="M224 337h8v8h-8zM112 705h8v8h-8zM128 705h8v8h-8zM160 705h8v8h-8z"/>
<path fill="#acc8e4" d="M336 337h8v8h-8zM232 385h8v8h-8zM256 385h8v8h-8zM368 385h8v8h-8zM264 425h8v8h-8zM256 473h8v8h-8zM400 569h8v8h-8zM336 705h8v8h-8z"/>
<path fill="#d8dcec" d="M96 345h8v8h-8zM96 529h8v8h-8zM96 713h8v8h-8z"/>
<path fill="#e4e8ec" d="M104 345h8v8h-8zM120 465h8v8h-8zM144 465h24v8h-24zM176 465h24v8h-24zM216 465h8v8h-8zM248 465h32v8h-32zM288 465h16v8h-16zM312 465h24v8h-24zM344 465h8v8h-8zM104 529h8v8h-8zM104 713h8v8h-8z"/>
<path fill="#e8ecec" d="M112 345h40v8h-40zM160 345h24v8h-24zM192 345h16v8h-16zM224 345h8v8h-8zM240 345h32v8h-32zM280 345h24v8h-24zM320 345h32v8h-32zM128 529h16v8h-16zM152 529h8v8h-8zM168 529h32v8h-32zM208 529h40v8h-40zM256 529h8v8h-8zM272 529h16v8h-16zM304 529h32v8h-32zM344 529h24v8h-24zM112 713h32v8h-32zM152 713h24v8h-24zM200 713h24v8h-24zM232 713h24v8h-24zM296 713h32v8h-32zM336 713h16v8h-16zM360 713h8v8h-8zM384 713h8v8h-8zM400 713h24v8h-24zM440 713h32v8h-32z"/>
<path fill="#a8b4ec" d="M96 353h8v8h-8zM96 537h8v8h-8zM96 721h8v8h-8z"/>
<path fill="#acb8f0" d="M96 361h8v8h-8zM96 545h8v8h-8zM96 729h8v8h-8z"/>
<path fill="#b4d0f0" d="M280 361h8v8h-8zM296 361h8v8h-8zM360 361h8v8h-8zM264 449h8v8h-8zM296 449h8v8h-8zM376 449h8v8h-8zM408 449h8v8h-8zM256 545h8v8h-8zM160 681h8v8h-8zM376 681h8v8h-8zM112 729h8v8h-8zM200 729h16v8h-16z"/>
<path fill="#e4e8f0" d="M96 369h8v8h-8zM96 553h8v8h-8zM96 737h8v8h-8z"/>
<path fill="#94a4e4" d="M96 377h8v8h-8zM96 473h8v8h-8zM96 561h8v8h-8zM96 745h8v8h-8z"/>
<path fill="#acb4e4" d="M96 385h8v8h-8zM96 569h8v8h-8zM96 753h8v8h-8z"/>
<path fill="#b4d0f4" d="M448 449h8v8h-8zM120 633h8v8h-8z"/>
<path fill="#e4f0f8" d="M160 457h8v8h-8z"/>
<path fill="#c8cce8" d="M96 465h8v8h-8zM96 481h8v8h-8z"/>
<path fill="#e4e4ec" d="M104 465h8v8h-8zM208 465h8v8h-8zM232 465h16v8h-16zM280 465h8v8h-8z"/>
<path fill="#e0e4ec" d="M112 465h8v8h-8zM128 465h8v8h-8zM336 465h8v8h-8z"/>
<path fill="#e8e8ec" d="M136 465h8v8h-8zM200 465h8v8h-8zM224 465h8v8h-8zM304 465h8v8h-8z"/>
<path fill="#e4e8e8" d="M200 481h8v8h-8zM304 481h8v8h-8zM144 697h8v8h-8zM432 697h8v8h-8z"/>
<path fill="#a0c4f0" d="M192 497h8v8h-8zM272 497h16v8h-16zM304 497h8v8h-8zM136 681h8v8h-8zM200 681h16v8h-16zM224 681h8v8h-8zM264 681h8v8h-8z"/>
<path fill="#a0bce4" d="M184 521h8v8h-8zM120 705h8v8h-8zM384 705h8v8h-8zM416 705h8v8h-8zM456 705h8v8h-8z"/>
<path fill="#c0d8c4" d="M96 649h8v8h-8z"/>
<path fill="#e0e8e4" d="M104 649h8v8h-8zM144 649h8v8h-8z"/>
<path fill="#e4e8e4" d="M128 649h8v8h-8zM152 649h40v8h-40zM200 649h40v8h-40zM248 649h32v8h-32zM296 649h48v8h-48zM280 665h8v8h-8z"/>
<path fill="#88bc88" d="M96 657h8v8h-8z"/>
<path fill="#d0dcd4" d="M104 657h8v8h-8zM136 657h8v8h-8zM240 657h8v8h-8z"/>
<path fill="#c4d8c4" d="M112 657h16v8h-16zM96 665h8v8h-8z"/>
<path fill="#b8d0b8" d="M128 657h8v8h-8zM184 657h8v8h-8zM272 657h8v8h-8z"/>
<path fill="#a0c4a4" d="M144 657h8v8h-8z"/>
<path fill="#c0d4c0" d="M152 657h8v8h-8zM224 657h8v8h-8z"/>
<path fill="#b8d0bc" d="M160 657h8v8h-8zM208 657h8v8h-8zM232 657h8v8h-8zM328 657h8v8h-8z"/>
<path fill="#a8c8a8" d="M168 657h16v8h-16z"/>
<path fill="#c4d8c8" d="M192 657h8v8h-8zM288 657h8v8h-8z"/>
<path fill="#b4d0b8" d="M200 657h8v8h-8z"/>
<path fill="#a4c8a4" d="M216 657h8v8h-8zM296 657h8v8h-8zM320 657h8v8h-8z"/>
<path fill="#b0ccb0" d="M248 657h8v8h-8zM264 657h8v8h-8z"/>
<path fill="#bcd4c0" d="M256 657h8v8h-8zM304 657h8v8h-8zM336 657h8v8h-8z"/>
<path fill="#d8e0dc" d="M280 657h8v8h-8zM104 665h8v8h-8z"/>
<path fill="#a8c8ac" d="M312 657h8v8h-8z"/>
<path fill="#e0e4e0" d="M112 665h16v8h-16zM192 665h8v8h-8zM288 665h8v8h-8z"/>
<path fill="#dce0dc" d="M128 665h8v8h-8zM184 665h8v8h-8zM200 665h8v8h-8z"/>
<path fill="#d4e0d8" d="M144 665h8v8h-8z"/>
<path fill="#dce4e0" d="M152 665h8v8h-8zM224 665h8v8h-8z"/>
<path fill="#dce4dc" d="M160 665h8v8h-8zM208 665h8v8h-8zM232 665h8v8h-8zM256 665h8v8h-8zM272 665h8v8h-8zM304 665h8v8h-8zM328 665h16v8h-16z"/>
<path fill="#d8e0d8" d="M168 665h16v8h-16zM216 665h8v8h-8zM248 665h8v8h-8zM264 665h8v8h-8zM296 665h8v8h-8zM312 665h16v8h-16z"/>
<path fill="#dce4e8" d="M144 705h8v8h-8z"/>
</svg>
<div class="abs" style="left:89px;top:811px;width:579px;height:14px;background:#ebeae9;border-top:1px solid #c9c7c4"></div>
<div class="abs" style="left:88.6px;top:811px;width:14px;height:14.4px;background:#fcfcfb;border:1px solid #c9c7c4"></div>
<div class="abs" style="left:101.6px;top:811px;width:131px;height:14.4px;background:#fcfcfb;border:1px solid #c9c7c4"></div>
<div class="abs" style="left:654.6px;top:811px;width:14px;height:14.4px;background:#fcfcfb;border:1px solid #c9c7c4"></div>
<svg class="abs" style="left:88px;top:811px" width="582" height="15" viewBox="88 811 582 15"><path d="M97.8 814.8 v6.8 l-4 -3.4z M659.4 814.8 v6.8 l4 -3.4z" fill="#444"/></svg>
<svg class="abs" style="left:370px;top:826px" width="20" height="3" viewBox="370 826 20 3"><g fill="#b5b3b0"><rect x="371.5" y="827" width="1" height="1"/><rect x="374.5" y="827" width="1" height="1"/><rect x="377.5" y="827" width="1" height="1"/><rect x="380.5" y="827" width="1" height="1"/><rect x="383.5" y="827" width="1" height="1"/><rect x="386.5" y="827" width="1" height="1"/></g></svg>
<svg class="abs" style="left:84px;top:585px" width="4" height="20" viewBox="84 585 4 20"><g fill="#b5b3b0"><rect x="85.6" y="587" width="1" height="1"/><rect x="85.6" y="590" width="1" height="1"/><rect x="85.6" y="593" width="1" height="1"/><rect x="85.6" y="596" width="1" height="1"/><rect x="85.6" y="599" width="1" height="1"/><rect x="85.6" y="602" width="1" height="1"/></g></svg>
<div class="abs" style="left:88.4px;top:834px;font-size:15px;line-height:21px;color:#000;white-space:pre;font-family:'Liberation Sans','DejaVu Sans',sans-serif;font-weight:700;">Period:</div>
<div class="abs" style="left:144.4px;top:830.4px;width:107.2px;height:28.4px;border:1px solid #c4c2bf;border-radius:3.5px;background:linear-gradient(#fdfdfc,#f3f2f1)"></div>
<div class="abs" style="left:149.4px;top:836px;font-size:13.85px;line-height:18px;color:#1a1a1a;white-space:pre;">1 Minute</div>
<div class="abs" style="left:542.2px;top:830.4px;width:126.4px;height:28.4px;border:1px solid #c4c2bf;border-radius:3.5px;background:linear-gradient(#fdfdfc,#f3f2f1)"></div>
<div class="abs" style="left:547.2px;top:836px;font-size:13.85px;line-height:18px;color:#1a1a1a;white-space:pre;">Select Graphs</div>
<svg class="abs" style="left:230px;top:838px" width="440" height="12" viewBox="230 838 440 12"><path d="M236.6 842.4 h7.4 l-3.7 4.4z M653.6 842.4 h7.4 l-3.7 4.4z" fill="#4d4d4d"/></svg>
<div class="abs" style="left:88.4px;top:862.4px;width:580.2px;height:98.2px;border:1px solid #c6c4c1;background:#faf9f8"></div>
<svg class="abs" style="left:89px;top:863px" width="579" height="97" viewBox="89 863 579 97">
<g stroke="#a9a7a4" stroke-width="1" stroke-dasharray="4 3" fill="none">
<path d="M89 887.5 H668"/>
<path d="M89 904.5 H668"/>
<path d="M89 921.5 H668"/>
<path d="M89 938.5 H668"/>
<path d="M89 955.5 H668"/>
<path d="M162.5 863 V960"/>
<path d="M246.5 863 V960"/>
<path d="M330.5 863 V960"/>
<path d="M415.5 863 V960"/>
<path d="M499.5 863 V960"/>
<path d="M583.5 863 V960"/>
</g>
<polyline fill="none" stroke="#3b8fee" stroke-width="1.5" stroke-linejoin="round" points="163.0,954.9 173.0,955.2 183.0,955.1 193.0,954.7 203.0,954.6 213.0,955.0 223.0,955.2 233.0,955.0 243.0,954.6 253.0,954.6 263.0,955.0 273.0,955.2 283.0,954.9 293.0,954.6 303.0,954.7 313.0,955.1 323.0,955.2 333.0,954.9 343.0,954.6 353.0,954.8 363.0,955.2 373.0,955.2 383.0,954.8 393.0,954.6 403.0,954.8 413.0,955.2 423.0,955.1 433.0,954.7 443.0,954.6 453.0,954.9 463.0,955.2 473.0,955.1 483.0,954.7 493.0,954.6 503.0,955.0 513.0,955.2 523.0,955.0 533.0,954.6 543.0,954.6 553.0,955.0 563.0,955.2 573.0,954.9 583.0,954.6 593.0,954.7 603.0,955.1 613.0,955.2 623.0,954.9 633.0,954.6 638.5,954.8 652.3,895.0 668.0,951.0"/>
<polyline fill="none" stroke="#86bd45" stroke-width="1.6" stroke-linejoin="round" points="163.0,955.0 173.0,955.0 183.0,954.8 193.0,954.4 203.0,954.2 213.0,954.3 223.0,954.7 233.0,955.0 243.0,955.0 253.0,954.7 263.0,954.4 273.0,954.2 283.0,954.3 293.0,954.7 303.0,955.0 313.0,955.0 323.0,954.7 333.0,954.3 343.0,954.2 353.0,954.3 363.0,954.7 373.0,955.0 383.0,955.0 393.0,954.7 403.0,954.3 413.0,954.2 423.0,954.3 433.0,954.7 443.0,955.0 453.0,955.0 463.0,954.7 473.0,954.3 483.0,954.2 493.0,954.3 503.0,954.7 513.0,955.0 523.0,955.0 533.0,954.7 543.0,954.3 553.0,954.2 563.0,954.3 573.0,954.7 583.0,955.0 593.0,955.0 603.0,954.7 613.0,954.3 623.0,954.2 633.0,954.3 638.5,954.6 652.3,931.6 668.0,951.0"/>
<rect x="165.6" y="885.8" width="90" height="1.7" fill="#3b8fee"/><rect x="165.6" y="915.8" width="110" height="1.7" fill="#86bd45"/>
</svg>
<div class="abs" style="left:-242.4px;width:400px;text-align:right;top:869px;font-size:13.85px;line-height:18px;color:#1a1a1a;white-space:pre;">240 KiB/s</div>
<div class="abs" style="left:-242.4px;width:400px;text-align:right;top:886px;font-size:13.85px;line-height:18px;color:#1a1a1a;white-space:pre;">180 KiB/s</div>
<div class="abs" style="left:-242.4px;width:400px;text-align:right;top:903px;font-size:13.85px;line-height:18px;color:#1a1a1a;white-space:pre;">120 KiB/s</div>
<div class="abs" style="left:-242.4px;width:400px;text-align:right;top:921px;font-size:13.85px;line-height:18px;color:#1a1a1a;white-space:pre;">60 KiB/s</div>
<div class="abs" style="left:-242.4px;width:400px;text-align:right;top:938px;font-size:13.85px;line-height:18px;color:#1a1a1a;white-space:pre;">0.0 KiB/s</div>
<div class="abs" style="left:166.2px;top:869px;font-size:13.85px;line-height:18px;color:#3b8fee;white-space:pre;">Total Upload</div>
<div class="abs" style="left:166.2px;top:899px;font-size:13.85px;line-height:18px;color:#86bd45;white-space:pre;">Total Download</div>
<div class="abs" style="left:88.4px;top:966.6px;width:89.2px;height:28px;border:1px solid #c4c2bf;border-radius:3.5px;background:linear-gradient(#fdfdfc,#f3f2f1)"></div>
<div class="abs" style="left:113.6px;top:972px;font-size:13.85px;line-height:18px;color:#1a1a1a;white-space:pre;">General</div>
<div class="abs" style="left:181.3px;top:966.6px;width:92.3px;height:28px;border:1px solid #c4c2bf;border-radius:3.5px;background:linear-gradient(#fdfdfc,#f3f2f1)"></div>
<div class="abs" style="left:206.4px;top:972px;font-size:13.85px;line-height:18px;color:#1a1a1a;white-space:pre;">Trackers</div>
<div class="abs" style="left:277.3px;top:966.6px;width:79.1px;height:28px;border:1px solid #c4c2bf;border-radius:3.5px;background:linear-gradient(#fdfdfc,#f3f2f1)"></div>
<div class="abs" style="left:305.6px;top:972px;font-size:13.85px;line-height:18px;color:#1a1a1a;white-space:pre;">Peers</div>
<div class="abs" style="left:360px;top:966.6px;width:130.7px;height:28px;border:1px solid #c4c2bf;border-radius:3.5px;background:linear-gradient(#fdfdfc,#f3f2f1)"></div>
<div class="abs" style="left:385.2px;top:972px;font-size:13.85px;line-height:18px;color:#1a1a1a;white-space:pre;">HTTP Sources</div>
<div class="abs" style="left:494.4px;top:966.6px;width:91.4px;height:28px;border:1px solid #c4c2bf;border-radius:3.5px;background:linear-gradient(#fdfdfc,#f3f2f1)"></div>
<div class="abs" style="left:519.6px;top:972px;font-size:13.85px;line-height:18px;color:#1a1a1a;white-space:pre;">Content</div>
<div class="abs" style="left:589.1px;top:966.6px;width:79.4px;height:28px;border:1px solid #c4c2bf;border-radius:3.5px;background:#e1e0df"></div>
<div class="abs" style="left:614.9px;top:972px;font-size:13.85px;line-height:18px;color:#1a1a1a;white-space:pre;">Speed</div>
<svg class="abs" style="left:88px;top:966px" width="582" height="30" viewBox="88 966 582 30">
<circle cx="102.9" cy="980" r="7" fill="#1e90ff"/><rect x="101.9" y="978.6" width="2.2" height="5.4" fill="#fff"/><rect x="100.8" y="978.6" width="2.6" height="1.2" fill="#fff"/><rect x="100.6" y="983.2" width="4.8" height="1.2" fill="#fff"/><circle cx="102.9" cy="976.2" r="1.3" fill="#fff"/>
<path d="M195.9 973 a5.6 5.6 0 0 1 5.6 5.6 q0 3.6 -5.6 9.2 q-5.6 -5.6 -5.6 -9.2 a5.6 5.6 0 0 1 5.6 -5.6z" fill="#1e90ff"/><circle cx="195.9" cy="978.6" r="2.2" fill="#f8f7f6"/>
<g fill="#1e90ff"><circle cx="292.4" cy="977.4" r="2.7"/><path d="M287.6 986.4 q0 -4.8 4.8 -4.8 t4.8 4.8z"/><circle cx="299" cy="976.8" r="2.4"/><path d="M297 980.8 q5.8 -.8 5.8 5.6 h-4.2 q0 -3.6 -1.6 -5.6z"/></g>
<g fill="#1e90ff"><ellipse cx="375" cy="976" rx="7" ry="2.8"/><path d="M368 978.2 q7 3.6 14 0 v2.6 q-7 3.6 -14 0z"/><path d="M368 982 q7 3.6 14 0 v2.6 q-7 3.6 -14 0z"/><path d="M368 985.8 q7 3.6 14 0 v1 q-7 4 -14 0z"/></g>
<path d="M501.6 973.4 h5 l1.6 1.8 h7.6 v12 h-14.2z" fill="#1e90ff"/><path d="M505 982.6 h5.6 q1.8 0 1.8 -1.8 t-1.8 -1.8 h-2.4" fill="none" stroke="#fff" stroke-width="1.2"/><path d="M506.4 980.6 l-2.2 2 l2.2 2z" fill="#fff"/>
<rect x="597.8" y="981.4" width="2.6" height="5.6" fill="#1e90ff"/><rect x="601.6" y="973.4" width="2.6" height="13.6" fill="#32cd32"/><rect x="605.4" y="977.4" width="2.6" height="9.6" fill="#32cd32"/><rect x="609.2" y="976" width="2.6" height="11" fill="#32cd32"/>
</svg>
<div class="abs" style="left:20.4px;top:1006px;width:1px;height:21px;background:#d2d0cd;"></div>
<div class="abs" style="left:147.5px;top:1006px;width:1px;height:21px;background:#d2d0cd;"></div>
<div class="abs" style="left:184.5px;top:1006px;width:1px;height:21px;background:#d2d0cd;"></div>
<div class="abs" style="left:229.7px;top:1006px;width:1px;height:21px;background:#d2d0cd;"></div>
<div class="abs" style="left:443.8px;top:1006px;width:1px;height:21px;background:#d2d0cd;"></div>
<div class="abs" style="left:28.4px;top:1008px;font-size:13.85px;line-height:18px;color:#1a1a1a;white-space:pre;">DHT: 448 nodes</div>
<div class="abs" style="left:258.4px;top:1008px;font-size:13.85px;line-height:18px;color:#1a1a1a;white-space:pre;">0 B/s (0 B)</div>
<div class="abs" style="left:473.2px;top:1008px;font-size:13.85px;line-height:18px;color:#1a1a1a;white-space:pre;">0 B/s (0 B)</div>
<svg class="abs" style="left:150px;top:1004px" width="526" height="26" viewBox="150 1004 526 26">
<circle cx="165.9" cy="1016" r="7" fill="#008000"/>
<path d="M161.2 1012.4 q2 -2.6 5 -2.2 l2.2 1.6 l-1.4 2.6 l-2.6 .6 l-1 2 l1.8 1.6 l-.4 2.8 q-3.6 -1.4 -3.6 -5.600z M168.600 1015.400 l2.800 -.6 q.8 3 -1.600 5.600 l-1.800 -2.400z" fill="#e8f5e8"/>
<path d="M202.830 1020.670 A5.900 5.900 0 0 1 206.490 1010.620" fill="none" stroke="#1e90ff" stroke-width="2.300"/><path d="M210.790 1011.980 A5.900 5.900 0 0 1 211.170 1020.670" fill="none" stroke="#1e90ff" stroke-width="2.300"/>
<path d="M205 1019.400 L209.800 1010.800 L207.600 1020.200z" fill="#32cd32"/>
<path d="M240.600 1010 L246.200 1014.600 L251.800 1010 M240.600 1016.400 L246.200 1021.400 L251.800 1016.400" fill="none" stroke="#008000" stroke-width="2.700"/>
<path d="M455 1014.600 L460.600 1010 L466.200 1014.600 M455 1021.400 L460.600 1016.600 L466.200 1021.400" fill="none" stroke="#4169e1" stroke-width="2.700"/>
<g fill="#b8b6b3"><rect x="672" y="1019" width="1" height="1"/><rect x="669" y="1022" width="1" height="1"/><rect x="672" y="1022" width="1" height="1"/><rect x="666" y="1025" width="1" height="1"/><rect x="669" y="1025" width="1" height="1"/><rect x="672" y="1025" width="1" height="1"/><rect x="663" y="1028" width="1" height="1"/><rect x="666" y="1028" width="1" height="1"/><rect x="669" y="1028" width="1" height="1"/><rect x="672" y="1028" width="1" height="1"/></g>
</svg>
</div></div>
<!--QB-END-->
<!--DISKS-START-->
<div class="win" id="disks" style="left:968px;top:48px;width:939px;height:483px;border-radius:9px;background:#353535;box-shadow:0 0 0 1px #0a0a0c"><div class="abs" style="left:-968px;top:-48px;width:2000px;height:1044px">
<div class="abs" style="left:968px;top:48px;width:200px;height:484px;background:#2e2e2e;"></div>
<div class="abs" style="left:1168px;top:47.5px;width:1px;height:484px;background:#1f1f1f;"></div>
<div class="abs" style="left:968px;top:100px;width:960px;height:1px;background:#202020;"></div>
<div class="abs" style="left:968px;top:48px;width:960px;height:1px;background:rgba(255,255,255,.07);"></div>
<div class="abs" style="left:1043.8px;top:63px;font-size:17.6px;line-height:24px;color:#9b9b9b;white-space:pre;font-family:'Liberation Sans','DejaVu Sans',sans-serif;font-weight:700;letter-spacing:.3px;">Disks</div>
<div class="abs" style="left:1126.2px;top:54.2px;width:35.4px;height:39.4px;border:1px solid #1c1c1c;border-radius:6px;background:#303030"></div>
<svg class="abs" style="left:1136px;top:62px" width="16" height="24" viewBox="1136 62 16 24"><g fill="#a8a8a8"><circle cx="1143.9" cy="68.3" r="2"/><circle cx="1143.9" cy="74.4" r="2"/><circle cx="1143.9" cy="80.4" r="2"/></g></svg>
<svg class="abs" style="left:1800px;top:64px" width="100" height="20" viewBox="1800 64 100 20"><g fill="#a9a9a9">
<rect x="1805.8" y="75.9" width="6.6" height="2.3"/>
<path d="M1848 69.7 h5.400 v5.400 z M1844.800 72.800 v5.400 h5.400 z"/>
</g><path d="M1885.600 70.600 L1892.600 77.600 M1892.600 70.600 L1885.600 77.600" stroke="#a9a9a9" stroke-width="2.2"/></svg>
<div class="abs" style="left:1003.2px;top:107px;font-size:16.55px;line-height:23px;color:#e6e6e6;white-space:pre;">512 GB Disk</div>
<div class="abs" style="left:1003.2px;top:132px;font-size:14.4px;line-height:20px;color:#dadada;white-space:pre;">KINGSTON…512B-A01</div>
<div class="abs" style="left:1003.2px;top:161px;font-size:16.55px;line-height:23px;color:#e6e6e6;white-space:pre;">SD Card Reader</div>
<div class="abs" style="left:1003.2px;top:186px;font-size:14.4px;line-height:20px;color:#dadada;white-space:pre;">SN01T</div>
<div class="abs" style="left:1003.2px;top:215px;font-size:16.55px;line-height:23px;color:#e6e6e6;white-space:pre;">2.0 TB Hard Disk</div>
<div class="abs" style="left:1003.2px;top:240px;font-size:14.4px;line-height:20px;color:#dadada;white-space:pre;">WDC WD…59YNDS0</div>
<div class="abs" style="left:1003.2px;top:269px;font-size:16.55px;line-height:23px;color:#e6e6e6;white-space:pre;">5.0 TB Hard Disk</div>
<div class="abs" style="left:1003.2px;top:295px;font-size:14.1px;line-height:18px;color:#dadada;white-space:pre;">Seagate E…nsion HDD</div>
<svg class="abs" style="left:970px;top:104px" width="198" height="220" viewBox="970 104 198 220">
<rect x="975" y="114" width="22.200" height="28" rx="2" fill="#9a9a9a"/>
<path d="M979.400 131.6 V124.8 a6.800 6.800 0 1 1 6.800 6.800 z" fill="#2e2e2e"/>
<circle cx="986.200" cy="124.8" r="3.200" fill="#9a9a9a"/>
<path d="M979.600 168 H995.200 q2 0 2 2 V194 q0 2 -2 2 H977 q-2 0 -2 -2 V173 z" fill="#686868"/>
<rect x="978.20" y="171" width="1.100" height="3.800" fill="#e6b93c"/>
<rect x="980.15" y="171" width="1.100" height="3.800" fill="#e6b93c"/>
<rect x="982.10" y="171" width="1.100" height="3.800" fill="#e6b93c"/>
<rect x="984.05" y="171" width="1.100" height="3.800" fill="#e6b93c"/>
<rect x="986.00" y="171" width="1.100" height="3.800" fill="#e6b93c"/>
<rect x="987.95" y="171" width="1.100" height="3.800" fill="#e6b93c"/>
<rect x="989.90" y="171" width="1.100" height="3.800" fill="#e6b93c"/>
<rect x="991.85" y="171" width="1.100" height="3.800" fill="#e6b93c"/>
<rect x="993.80" y="171" width="1.100" height="3.800" fill="#e6b93c"/>
<rect x="978.200" y="182.6" width="15.800" height="9.600" fill="#2e2e2e"/>
<rect x="975" y="222" width="22.200" height="28" rx="2" fill="#9a9a9a"/>
<path d="M979.400 239.6 V232.8 a6.800 6.800 0 1 1 6.800 6.800 z" fill="#2e2e2e"/>
<circle cx="986.200" cy="232.8" r="3.200" fill="#9a9a9a"/>
<rect x="975" y="276" width="22.200" height="28" rx="2" fill="#9a9a9a"/>
<path d="M979.400 293.6 V286.8 a6.800 6.800 0 1 1 6.800 6.800 z" fill="#2e2e2e"/>
<circle cx="986.200" cy="286.8" r="3.200" fill="#9a9a9a"/>
<g fill="none" stroke="#d6d6d6" stroke-width="1.1"><path d="M1151.800 230.300 h4.200 l-4.200 4 h4.400"/><path d="M1156.200 233.800 h4.200 l-4.200 4 h4.400"/><path d="M1160.400 237.400 h4.600 l-4.600 4.400 h4.800"/></g>
</svg>
<svg class="abs" style="left:1470px;top:190px" width="140" height="120" viewBox="1470 190 140 120"><g fill="#666666">
<rect x="1476" y="194.700" width="128" height="48" rx="6"/><rect x="1476" y="250.700" width="128" height="48" rx="6"/>
<rect x="1492" y="240" width="8" height="14"/><rect x="1580" y="240" width="8" height="14"/>
<rect x="1492" y="296" width="8" height="10.800"/><rect x="1580" y="296" width="8" height="10.800"/></g>
<circle cx="1580.400" cy="218.600" r="8" fill="#353535"/><circle cx="1580.400" cy="274.700" r="8" fill="#353535"/></svg>
<div class="abs" style="left:1240.0px;width:600px;text-align:center;top:357px;font-size:36.6px;line-height:49px;color:#939391;white-space:pre;">No Device Selected</div>
<div class="abs" style="left:1240.0px;width:600px;text-align:center;top:421px;font-size:16.8px;line-height:22px;color:#8d8d8b;white-space:pre;">Select a device to manage.</div>
</div></div>
<!--DISKS-END-->
<!--FILES-START-->
<div class="win" id="files" style="left:969px;top:548px;width:938px;height:482px;border-radius:12px;background:#1d1d20;box-shadow:0 0 0 1px rgba(8,8,12,.9)"><div class="abs" style="left:-969px;top:-548px;width:2000px;height:1044px">
<div class="abs" style="left:969px;top:548px;width:186px;height:482px;background:#28282c;"></div>
<div class="abs" style="left:969px;top:548px;width:960px;height:1px;background:rgba(255,255,255,.08);"></div>
<div class="abs" style="left:1040.8px;top:560px;font-size:17.8px;line-height:24px;color:#9c9c9e;white-space:pre;font-family:'Liberation Sans','DejaVu Sans',sans-serif;font-weight:700;letter-spacing:.3px;">Files</div>
<svg class="abs" style="left:980px;top:560px" width="160" height="24" viewBox="980 560 160 24">
<circle cx="989.200" cy="569.400" r="4.300" fill="none" stroke="#a4a4a6" stroke-width="2"/><path d="M992.400 572.800 L997.400 577.600" stroke="#a4a4a6" stroke-width="2.200" stroke-linecap="round"/>
<g fill="#a4a4a6"><circle cx="1133" cy="564.900" r="2"/><circle cx="1133" cy="571.300" r="2"/><circle cx="1133" cy="577.600" r="2"/></g></svg>
<svg class="abs" style="left:1168px;top:560px" width="64" height="24" viewBox="1168 560 64 24">
<path d="M1185 571.400 H1174.600 M1179.200 566.400 L1174.200 571.400 L1179.200 576.400" fill="none" stroke="#b9b9bb" stroke-width="2"/>
<path d="M1213 571.400 H1223.400 M1218.800 566.400 L1223.800 571.400 L1218.800 576.400" fill="none" stroke="#555558" stroke-width="2"/></svg>
<div class="abs" style="left:1242.200px;top:554.400px;width:446.600px;height:34.200px;border-radius:8px;background:#2e2e32"></div>
<div class="abs" style="left:1251.2px;top:559.4px;width:102px;height:24.4px;background:#3b3b3f;"></div>
<div class="abs" style="left:1251.4px;top:561px;font-size:17.7px;line-height:24px;color:#9d9d9f;white-space:pre;">/run/media/</div>
<div class="abs" style="left:1654.5px;top:554.4px;width:1px;height:34.2px;background:#1d1d20;"></div>
<svg class="abs" style="left:1353px;top:555px" width="180" height="40" viewBox="1353 555 180 40" shape-rendering="crispEdges">
<rect x="1353" y="563.900" width="178" height="26" fill="#2b2b2f"/>
<rect x="1353.0" y="563.900" width="8.200" height="9" fill="#454548"/><rect x="1353.0" y="572.900" width="8.200" height="9" fill="#4a4a4d"/>
<rect x="1361.1" y="563.900" width="8.200" height="9" fill="#3a3a3d"/><rect x="1361.1" y="572.900" width="8.200" height="9" fill="#515154"/>
<rect x="1369.2" y="563.900" width="8.200" height="9" fill="#404043"/><rect x="1369.2" y="572.900" width="8.200" height="9" fill="#4b4b4e"/>
<rect x="1377.3" y="563.900" width="8.200" height="9" fill="#48484b"/><rect x="1377.3" y="572.900" width="8.200" height="9" fill="#434346"/>
<rect x="1385.4" y="563.900" width="8.200" height="9" fill="#424245"/><rect x="1385.4" y="572.900" width="8.200" height="9" fill="#4e4e51"/>
<rect x="1393.5" y="563.900" width="8.200" height="9" fill="#4c4c4f"/><rect x="1393.5" y="572.900" width="8.200" height="9" fill="#48484b"/>
<rect x="1401.6" y="563.900" width="8.200" height="9" fill="#444447"/><rect x="1401.6" y="572.900" width="8.200" height="9" fill="#505053"/>
<rect x="1409.7" y="563.900" width="8.200" height="9" fill="#3e3e41"/><rect x="1409.7" y="572.900" width="8.200" height="9" fill="#49494c"/>
<rect x="1417.8" y="563.900" width="8.200" height="9" fill="#4a4a4d"/><rect x="1417.8" y="572.900" width="8.200" height="9" fill="#444447"/>
<rect x="1425.9" y="563.900" width="8.200" height="9" fill="#464649"/><rect x="1425.9" y="572.900" width="8.200" height="9" fill="#535356"/>
<rect x="1434.0" y="563.900" width="8.200" height="9" fill="#505053"/><rect x="1434.0" y="572.900" width="8.200" height="9" fill="#4a4a4d"/>
<rect x="1442.1" y="563.900" width="8.200" height="9" fill="#48484b"/><rect x="1442.1" y="572.900" width="8.200" height="9" fill="#4f4f52"/>
<rect x="1450.2" y="563.900" width="8.200" height="9" fill="#424245"/><rect x="1450.2" y="572.900" width="8.200" height="9" fill="#47474a"/>
<rect x="1458.3" y="563.900" width="8.200" height="9" fill="#4b4b4e"/><rect x="1458.3" y="572.900" width="8.200" height="9" fill="#515154"/>
<rect x="1466.4" y="563.900" width="8.200" height="9" fill="#444447"/><rect x="1466.4" y="572.900" width="8.200" height="9" fill="#4b4b4e"/>
<rect x="1474.5" y="563.900" width="8.200" height="9" fill="#4e4e51"/><rect x="1474.5" y="572.900" width="8.200" height="9" fill="#454548"/>
<rect x="1482.6" y="563.900" width="8.200" height="9" fill="#3f3f42"/><rect x="1482.6" y="572.900" width="8.200" height="9" fill="#525255"/>
<rect x="1490.7" y="563.900" width="8.200" height="9" fill="#48484b"/><rect x="1490.7" y="572.900" width="8.200" height="9" fill="#4a4a4d"/>
<rect x="1498.8" y="563.900" width="8.200" height="9" fill="#505053"/><rect x="1498.8" y="572.900" width="8.200" height="9" fill="#48484b"/>
<rect x="1506.9" y="563.900" width="8.200" height="9" fill="#464649"/><rect x="1506.9" y="572.900" width="8.200" height="9" fill="#58585b"/>
<rect x="1515.0" y="563.900" width="8.200" height="9" fill="#3c3c3f"/><rect x="1515.0" y="572.900" width="8.200" height="9" fill="#414144"/>
</svg>
<svg class="abs" style="left:1630px;top:556px" width="277" height="32" viewBox="1630 556 277 32">
<path d="M1633.600 571.400 L1638 566.200 H1646.400 Q1647.400 566.200 1647.400 567.200 V575.600 Q1647.400 576.600 1646.400 576.600 H1638 Z" fill="#77777a"/>
<path d="M1640 568.800 L1645 573.800 M1645 568.800 L1640 573.800" stroke="#2e2e32" stroke-width="1.600"/>
<path d="M1668.400 567.400 L1676 575 M1676 567.400 L1668.400 575" stroke="#c4c4c6" stroke-width="2.200"/>
<path d="M1705 564 h5.200 l1.600 1.800 h6.800 v4 h-6 a5 5 0 0 0 -4 8 h-3.600 z" fill="#a2a2a4"/>
<circle cx="1713.600" cy="573" r="3.600" fill="none" stroke="#a2a2a4" stroke-width="1.800"/><path d="M1716.200 575.800 L1719.600 579.200" stroke="#a2a2a4" stroke-width="2"/>
<g fill="#a6a6a8"><rect x="1744.800" y="564.200" width="3.800" height="3.400"/><rect x="1744.800" y="569.400" width="3.800" height="3.400"/><rect x="1744.800" y="574.600" width="3.800" height="3.400"/>
<rect x="1750.800" y="565" width="8.400" height="1.800"/><rect x="1750.800" y="570.200" width="8.400" height="1.800"/><rect x="1750.800" y="575.400" width="8.400" height="1.800"/>
<path d="M1775 569 h10 l-5 5.400z"/></g>
<rect x="1768" y="560" width="1" height="21.800" fill="#3a3a3e"/>
<circle cx="1814.900" cy="571" r="12" fill="#2e2e31"/><circle cx="1852" cy="571" r="12" fill="#2e2e31"/><circle cx="1888.900" cy="571" r="12" fill="#2e2e31"/>
<rect x="1811.600" y="574" width="6.600" height="2.200" fill="#b4b4b6"/>
<path d="M1852.600 566.600 h4.600 v4.600 z M1847 571.200 v4.600 h4.600 z" fill="#b4b4b6"/>
<path d="M1885.200 567.400 L1892.600 574.800 M1892.600 567.400 L1885.200 574.800" stroke="#c6c6c8" stroke-width="2.200"/>
</svg>
<div class="abs" style="left:1011.6px;top:607px;font-size:17.5px;line-height:24px;color:#ffffff;white-space:pre;">Home</div>
<div class="abs" style="left:1011.6px;top:645px;font-size:17.5px;line-height:24px;color:#ffffff;white-space:pre;">Recent</div>
<div class="abs" style="left:1011.6px;top:683px;font-size:17.5px;line-height:24px;color:#ffffff;white-space:pre;">Starred</div>
<div class="abs" style="left:1011.6px;top:721px;font-size:17.5px;line-height:24px;color:#ffffff;white-space:pre;">Network</div>
<div class="abs" style="left:1011.6px;top:759px;font-size:17.5px;line-height:24px;color:#ffffff;white-space:pre;">Wastebasket</div>
<div class="abs" style="left:1011.6px;top:848px;font-size:17.5px;line-height:24px;color:#ffffff;white-space:pre;">Documents</div>
<div class="abs" style="left:1011.6px;top:886px;font-size:17.5px;line-height:24px;color:#ffffff;white-space:pre;">Music</div>
<div class="abs" style="left:1011.6px;top:924px;font-size:17.5px;line-height:24px;color:#ffffff;white-space:pre;">Pictures</div>
<div class="abs" style="left:1011.6px;top:962px;font-size:17.5px;line-height:24px;color:#ffffff;white-space:pre;">Videos</div>
<div class="abs" style="left:1011.6px;top:1000px;font-size:17.5px;line-height:24px;color:#ffffff;white-space:pre;">Downloads</div>
<div class="abs" style="left:974px;top:796.5px;width:176px;height:1px;background:#3d3d41;"></div>
<svg class="abs" style="left:985px;top:606px" width="24" height="424" viewBox="985 606 24 424"><g fill="#d2d2d4">
<path d="M996.200 610.800 L1003.600 617.600 H1001.800 V624.600 H997.800 V620.200 H994.600 V624.600 H990.600 V617.600 H988.800 Z"/>
<path d="M996.200 649.400 a7.200 7.200 0 1 0 .01 0 z M996.200 651.600 a5 5 0 1 1 -.01 0 z"/><path d="M995.200 652.600 h2 v3.600 l2.600 1.600 l-1 1.600 l-3.600 -2.200 z"/>
<path d="M996.200 687.200 L998.400 692.400 L1003.800 692.800 L999.600 696.400 L1001 701.800 L996.200 698.800 L991.400 701.800 L992.800 696.400 L988.600 692.800 L994 692.400 Z"/>
<path d="M991.600 724.600 h9.200 q1 0 1 1 v8.600 h-11.200 v-8.600 q0 -1 1 -1 z M988.400 738.200 h4.400 v-2 h7 v2 h4.200 v1.600 h-15.600 z"/>
<path d="M989.600 765.600 h13.200 l-.6 -2 q-.4 -1 -1.400 -1 h-9.200 q-1 0 -1.400 1 z M989.400 767 h13.600 v9.600 q0 2 -2 2 h-9.600 q-2 0 -2 -2 z"/>
<path d="M990.800 852.400 h6.800 l4.200 4.200 v10 q0 1 -1 1 h-10 q-1 0 -1 -1 v-13.200 q0 -1 1 -1 z"/>
<path d="M992.800 890.400 l9.600 -1.800 v10.800 a2.500 2.500 0 1 1 -2 -2.450 v-4.750 l-5.600 1.050 v7.550 a2.500 2.500 0 1 1 -2 -2.450 z"/>
<path d="M990.400 929.200 h11.600 q1.600 0 1.600 1.600 v9 q0 1.600 -1.600 1.600 h-11.600 q-1.600 0 -1.600 -1.600 v-9 q0 -1.600 1.600 -1.600 z"/>
<path d="M990 967.800 h8 q1.600 0 1.600 1.600 v1.800 l4 -2.400 v9 l-4 -2.400 v1.800 q0 1.600 -1.600 1.600 h-8 q-1.600 0 -1.600 -1.600 v-7.800 q0 -1.600 1.600 -1.600 z"/>
<path d="M994.800 1004 h3 v6 h3.400 l-4.900 5.400 l-4.900 -5.400 h3.400 z M989.600 1017.600 h13.400 v2 h-13.400 z"/>
</g>
<rect x="993.400" y="727" width="5.800" height="3" fill="#28282c"/><rect x="997.400" y="731.400" width="1.800" height="1.400" fill="#28282c"/>
<path d="M990.600 939 l3.200 -4 l2.400 2.600 l2 -1.800 l3.400 3.200 z" fill="#28282c"/><circle cx="999.200" cy="932.800" r="1.100" fill="#28282c"/>
</svg>
<svg class="abs" style="left:985px;top:806px" width="160" height="26" viewBox="985 806 160 26" shape-rendering="crispEdges">
<rect x="987" y="810" width="9" height="9" fill="#55555a"/>
<rect x="996" y="810" width="9" height="9" fill="#6c6c70"/>
<rect x="987" y="819" width="9" height="9" fill="#6e6e72"/>
<rect x="996" y="819" width="9" height="9" fill="#505055"/>
<rect x="1013.0" y="810" width="8.900" height="9" fill="#4c4c50"/><rect x="1013.0" y="819" width="8.900" height="9" fill="#77777b"/>
<rect x="1021.8" y="810" width="8.900" height="9" fill="#5a5a5e"/><rect x="1021.8" y="819" width="8.900" height="9" fill="#8a8a8e"/>
<rect x="1030.6" y="810" width="8.900" height="9" fill="#525256"/><rect x="1030.6" y="819" width="8.900" height="9" fill="#808084"/>
<rect x="1039.4" y="810" width="8.900" height="9" fill="#48484c"/><rect x="1039.4" y="819" width="8.900" height="9" fill="#6a6a6e"/>
<rect x="1048.2" y="810" width="8.900" height="9" fill="#3e3e42"/><rect x="1048.2" y="819" width="8.900" height="9" fill="#5e5e62"/>
<rect x="1057.0" y="810" width="8.900" height="9" fill="#454549"/><rect x="1057.0" y="819" width="8.900" height="9" fill="#66666a"/>
<rect x="1065.8" y="810" width="8.900" height="9" fill="#404044"/><rect x="1065.8" y="819" width="8.900" height="9" fill="#5a5a5e"/>
<rect x="1074.6" y="810" width="8.900" height="9" fill="#4a4a4e"/><rect x="1074.6" y="819" width="8.900" height="9" fill="#707074"/>
<rect x="1083.4" y="810" width="8.900" height="9" fill="#56565a"/><rect x="1083.4" y="819" width="8.900" height="9" fill="#85858a"/>
<rect x="1092.2" y="810" width="8.900" height="9" fill="#48484c"/><rect x="1092.2" y="819" width="8.900" height="9" fill="#6c6c70"/>
<rect x="1101.0" y="810" width="8.900" height="9" fill="#505054"/><rect x="1101.0" y="819" width="8.900" height="9" fill="#7c7c80"/>
<rect x="1109.8" y="810" width="8.900" height="9" fill="#4a4a4e"/><rect x="1109.8" y="819" width="8.900" height="9" fill="#707074"/>
<rect x="1118.6" y="810" width="8.900" height="9" fill="#444448"/><rect x="1118.6" y="819" width="8.900" height="9" fill="#66666a"/>
<rect x="1127.4" y="810" width="8.900" height="9" fill="#3a3a3e"/><rect x="1127.4" y="819" width="8.900" height="9" fill="#4a4a4e"/>
</svg>
<svg class="abs" style="left:1217.3px;top:636px" width="150" height="136" viewBox="0 0 150 136">
<path d="M1 12 Q1 1 12 1 H46 Q52 1 56 5 L63.500 12.800 Q67.500 17 74 17 H137 Q148.500 17 148.500 28 V120 H1 Z" fill="#4877b4"/>
<path d="M12 34 Q12 24.600 21 24.600 H129 Q138 24.600 138 34 V60 H12 Z" fill="#e4e4e4"/>
<path d="M1 48 Q1 37.600 11 37.600 H138.500 Q148.500 37.600 148.500 48 V123 Q148.500 133.500 138.500 133.500 H11 Q1 133.500 1 123 Z" fill="#5595e2"/>
<path d="M1 121 V123 Q1 133.500 11 133.500 H138.500 Q148.500 133.500 148.500 123 V121 Q148.500 131.500 138.500 131.500 H11 Q1 131.500 1 121 Z" fill="#3d6fae"/>
</svg>
<svg class="abs" style="left:1459.3px;top:636px" width="150" height="136" viewBox="0 0 150 136">
<path d="M1 12 Q1 1 12 1 H46 Q52 1 56 5 L63.500 12.800 Q67.500 17 74 17 H137 Q148.500 17 148.500 28 V120 H1 Z" fill="#4877b4"/>
<path d="M12 34 Q12 24.600 21 24.600 H129 Q138 24.600 138 34 V60 H12 Z" fill="#e4e4e4"/>
<path d="M1 48 Q1 37.600 11 37.600 H138.500 Q148.500 37.600 148.500 48 V123 Q148.500 133.500 138.500 133.500 H11 Q1 133.500 1 123 Z" fill="#5595e2"/>
<path d="M1 121 V123 Q1 133.500 11 133.500 H138.500 Q148.500 133.500 148.500 123 V121 Q148.500 131.500 138.500 131.500 H11 Q1 131.500 1 121 Z" fill="#3d6fae"/>
</svg>
<svg class="abs" style="left:1701.6px;top:636px" width="150" height="136" viewBox="0 0 150 136">
<path d="M1 12 Q1 1 12 1 H46 Q52 1 56 5 L63.500 12.800 Q67.500 17 74 17 H137 Q148.500 17 148.500 28 V120 H1 Z" fill="#4877b4"/>
<path d="M12 34 Q12 24.600 21 24.600 H129 Q138 24.600 138 34 V60 H12 Z" fill="#e4e4e4"/>
<path d="M1 48 Q1 37.600 11 37.600 H138.500 Q148.500 37.600 148.500 48 V123 Q148.500 133.500 138.500 133.500 H11 Q1 133.500 1 123 Z" fill="#5595e2"/>
<path d="M1 121 V123 Q1 133.500 11 133.500 H138.500 Q148.500 133.500 148.500 123 V121 Q148.500 131.500 138.500 131.500 H11 Q1 131.500 1 121 Z" fill="#3d6fae"/>
</svg>
<svg class="abs" style="left:1217.3px;top:853px" width="150" height="136" viewBox="0 0 150 136">
<path d="M1 12 Q1 1 12 1 H46 Q52 1 56 5 L63.500 12.800 Q67.500 17 74 17 H137 Q148.500 17 148.500 28 V120 H1 Z" fill="#4877b4"/>
<path d="M12 34 Q12 24.600 21 24.600 H129 Q138 24.600 138 34 V60 H12 Z" fill="#e4e4e4"/>
<path d="M1 48 Q1 37.600 11 37.600 H138.500 Q148.500 37.600 148.500 48 V123 Q148.500 133.500 138.500 133.500 H11 Q1 133.500 1 123 Z" fill="#5595e2"/>
<path d="M1 121 V123 Q1 133.500 11 133.500 H138.500 Q148.500 133.500 148.500 123 V121 Q148.500 131.500 138.500 131.500 H11 Q1 131.500 1 121 Z" fill="#3d6fae"/>
</svg>
<svg class="abs" style="left:1200px;top:790px" width="707" height="254" viewBox="1200 790 707 254" shape-rendering="crispEdges">
<rect x="1232.0" y="798.0" width="8.5" height="9.4" fill="#404043"/>
<rect x="1240.4" y="798.0" width="8.5" height="9.4" fill="#38383b"/>
<rect x="1248.7" y="798.0" width="8.5" height="9.4" fill="#343437"/>
<rect x="1257.1" y="798.0" width="8.5" height="9.4" fill="#303033"/>
<rect x="1265.4" y="798.0" width="8.5" height="9.4" fill="#343437"/>
<rect x="1273.8" y="798.0" width="8.5" height="9.4" fill="#404043"/>
<rect x="1282.1" y="798.0" width="8.5" height="9.4" fill="#343437"/>
<rect x="1290.5" y="798.0" width="8.5" height="9.4" fill="#343437"/>
<rect x="1298.9" y="798.0" width="8.5" height="9.4" fill="#38383b"/>
<rect x="1307.2" y="798.0" width="8.5" height="9.4" fill="#38383b"/>
<rect x="1315.6" y="798.0" width="8.5" height="9.4" fill="#3c3c3f"/>
<rect x="1323.9" y="798.0" width="8.5" height="9.4" fill="#303033"/>
<rect x="1332.3" y="798.0" width="8.5" height="9.4" fill="#2a2a2d"/>
<rect x="1340.6" y="798.0" width="8.5" height="9.4" fill="#2a2a2d"/>
<rect x="1232.0" y="807.3" width="8.5" height="9.4" fill="#48484b"/>
<rect x="1240.4" y="807.3" width="8.5" height="9.4" fill="#404043"/>
<rect x="1248.7" y="807.3" width="8.5" height="9.4" fill="#404043"/>
<rect x="1257.1" y="807.3" width="8.5" height="9.4" fill="#4c4c4f"/>
<rect x="1265.4" y="807.3" width="8.5" height="9.4" fill="#505053"/>
<rect x="1273.8" y="807.3" width="8.5" height="9.4" fill="#242427"/>
<rect x="1282.1" y="807.3" width="8.5" height="9.4" fill="#4c4c4f"/>
<rect x="1290.5" y="807.3" width="8.5" height="9.4" fill="#404043"/>
<rect x="1298.9" y="807.3" width="8.5" height="9.4" fill="#48484b"/>
<rect x="1307.2" y="807.3" width="8.5" height="9.4" fill="#404043"/>
<rect x="1315.6" y="807.3" width="8.5" height="9.4" fill="#404043"/>
<rect x="1323.9" y="807.3" width="8.5" height="9.4" fill="#545457"/>
<rect x="1332.3" y="807.3" width="8.5" height="9.4" fill="#38383b"/>
<rect x="1340.6" y="807.3" width="8.5" height="9.4" fill="#505053"/>
<rect x="1468.0" y="797.0" width="8.3" height="9.4" fill="#505053"/>
<rect x="1476.2" y="797.0" width="8.3" height="9.4" fill="#303033"/>
<rect x="1484.4" y="797.0" width="8.3" height="9.4" fill="#404043"/>
<rect x="1492.6" y="797.0" width="8.3" height="9.4" fill="#48484b"/>
<rect x="1500.8" y="797.0" width="8.3" height="9.4" fill="#303033"/>
<rect x="1508.9" y="797.0" width="8.3" height="9.4" fill="#242427"/>
<rect x="1517.1" y="797.0" width="8.3" height="9.4" fill="#303033"/>
<rect x="1525.3" y="797.0" width="8.3" height="9.4" fill="#242427"/>
<rect x="1533.5" y="797.0" width="8.3" height="9.4" fill="#3c3c3f"/>
<rect x="1541.7" y="797.0" width="8.3" height="9.4" fill="#242427"/>
<rect x="1549.9" y="797.0" width="8.3" height="9.4" fill="#2a2a2d"/>
<rect x="1558.1" y="797.0" width="8.3" height="9.4" fill="#505053"/>
<rect x="1566.2" y="797.0" width="8.3" height="9.4" fill="#48484b"/>
<rect x="1574.4" y="797.0" width="8.3" height="9.4" fill="#2a2a2d"/>
<rect x="1582.6" y="797.0" width="8.3" height="9.4" fill="#242427"/>
<rect x="1590.8" y="797.0" width="8.3" height="9.4" fill="#2a2a2d"/>
<rect x="1468.0" y="806.3" width="8.3" height="9.4" fill="#404043"/>
<rect x="1476.2" y="806.3" width="8.3" height="9.4" fill="#48484b"/>
<rect x="1484.4" y="806.3" width="8.3" height="9.4" fill="#38383b"/>
<rect x="1492.6" y="806.3" width="8.3" height="9.4" fill="#545457"/>
<rect x="1500.8" y="806.3" width="8.3" height="9.4" fill="#505053"/>
<rect x="1508.9" y="806.3" width="8.3" height="9.4" fill="#404043"/>
<rect x="1517.1" y="806.3" width="8.3" height="9.4" fill="#404043"/>
<rect x="1525.3" y="806.3" width="8.3" height="9.4" fill="#444447"/>
<rect x="1533.5" y="806.3" width="8.3" height="9.4" fill="#48484b"/>
<rect x="1541.7" y="806.3" width="8.3" height="9.4" fill="#5c5c5f"/>
<rect x="1549.9" y="806.3" width="8.3" height="9.4" fill="#404043"/>
<rect x="1558.1" y="806.3" width="8.3" height="9.4" fill="#48484b"/>
<rect x="1566.2" y="806.3" width="8.3" height="9.4" fill="#38383b"/>
<rect x="1574.4" y="806.3" width="8.3" height="9.4" fill="#242427"/>
<rect x="1582.6" y="806.3" width="8.3" height="9.4" fill="#242427"/>
<rect x="1590.8" y="806.3" width="8.3" height="9.4" fill="#545457"/>
<rect x="1694.0" y="798.0" width="8.3" height="9.4" fill="#505053"/>
<rect x="1702.2" y="798.0" width="8.3" height="9.4" fill="#48484b"/>
<rect x="1710.4" y="798.0" width="8.3" height="9.4" fill="#2a2a2d"/>
<rect x="1718.6" y="798.0" width="8.3" height="9.4" fill="#2a2a2d"/>
<rect x="1726.8" y="798.0" width="8.3" height="9.4" fill="#48484b"/>
<rect x="1735.0" y="798.0" width="8.3" height="9.4" fill="#48484b"/>
<rect x="1743.2" y="798.0" width="8.3" height="9.4" fill="#505053"/>
<rect x="1751.4" y="798.0" width="8.3" height="9.4" fill="#38383b"/>
<rect x="1759.6" y="798.0" width="8.3" height="9.4" fill="#505053"/>
<rect x="1767.8" y="798.0" width="8.3" height="9.4" fill="#48484b"/>
<rect x="1776.0" y="798.0" width="8.3" height="9.4" fill="#242427"/>
<rect x="1784.2" y="798.0" width="8.3" height="9.4" fill="#2a2a2d"/>
<rect x="1792.4" y="798.0" width="8.3" height="9.4" fill="#38383b"/>
<rect x="1800.6" y="798.0" width="8.3" height="9.4" fill="#404043"/>
<rect x="1808.8" y="798.0" width="8.3" height="9.4" fill="#48484b"/>
<rect x="1817.0" y="798.0" width="8.3" height="9.4" fill="#38383b"/>
<rect x="1825.2" y="798.0" width="8.3" height="9.4" fill="#242427"/>
<rect x="1833.4" y="798.0" width="8.3" height="9.4" fill="#505053"/>
<rect x="1841.6" y="798.0" width="8.3" height="9.4" fill="#404043"/>
<rect x="1849.8" y="798.0" width="8.3" height="9.4" fill="#242427"/>
<rect x="1694.0" y="807.3" width="8.3" height="9.4" fill="#5c5c5f"/>
<rect x="1702.2" y="807.3" width="8.3" height="9.4" fill="#4c4c4f"/>
<rect x="1710.4" y="807.3" width="8.3" height="9.4" fill="#242427"/>
<rect x="1718.6" y="807.3" width="8.3" height="9.4" fill="#5c5c5f"/>
<rect x="1726.8" y="807.3" width="8.3" height="9.4" fill="#505053"/>
<rect x="1735.0" y="807.3" width="8.3" height="9.4" fill="#545457"/>
<rect x="1743.2" y="807.3" width="8.3" height="9.4" fill="#444447"/>
<rect x="1751.4" y="807.3" width="8.3" height="9.4" fill="#545457"/>
<rect x="1759.6" y="807.3" width="8.3" height="9.4" fill="#404043"/>
<rect x="1767.8" y="807.3" width="8.3" height="9.4" fill="#48484b"/>
<rect x="1776.0" y="807.3" width="8.3" height="9.4" fill="#404043"/>
<rect x="1784.2" y="807.3" width="8.3" height="9.4" fill="#242427"/>
<rect x="1792.4" y="807.3" width="8.3" height="9.4" fill="#404043"/>
<rect x="1800.6" y="807.3" width="8.3" height="9.4" fill="#38383b"/>
<rect x="1808.8" y="807.3" width="8.3" height="9.4" fill="#404043"/>
<rect x="1817.0" y="807.3" width="8.3" height="9.4" fill="#242427"/>
<rect x="1825.2" y="807.3" width="8.3" height="9.4" fill="#4c4c4f"/>
<rect x="1833.4" y="807.3" width="8.3" height="9.4" fill="#48484b"/>
<rect x="1841.6" y="807.3" width="8.3" height="9.4" fill="#5c5c5f"/>
<rect x="1849.8" y="807.3" width="8.3" height="9.4" fill="#242427"/>
<rect x="1263.0" y="1012.0" width="8.2" height="9.4" fill="#242427"/>
<rect x="1271.1" y="1012.0" width="8.2" height="9.4" fill="#404043"/>
<rect x="1279.3" y="1012.0" width="8.2" height="9.4" fill="#3c3c3f"/>
<rect x="1287.4" y="1012.0" width="8.2" height="9.4" fill="#2a2a2d"/>
<rect x="1295.6" y="1012.0" width="8.2" height="9.4" fill="#303033"/>
<rect x="1303.7" y="1012.0" width="8.2" height="9.4" fill="#48484b"/>
<rect x="1311.9" y="1012.0" width="8.2" height="9.4" fill="#2a2a2d"/>
<rect x="1263.0" y="1021.3" width="8.2" height="9.4" fill="#242427"/>
<rect x="1271.1" y="1021.3" width="8.2" height="9.4" fill="#444447"/>
<rect x="1279.3" y="1021.3" width="8.2" height="9.4" fill="#48484b"/>
<rect x="1287.4" y="1021.3" width="8.2" height="9.4" fill="#4c4c4f"/>
<rect x="1295.6" y="1021.3" width="8.2" height="9.4" fill="#38383b"/>
<rect x="1303.7" y="1021.3" width="8.2" height="9.4" fill="#5c5c5f"/>
<rect x="1311.9" y="1021.3" width="8.2" height="9.4" fill="#444447"/>
</svg>
</div></div>
<!--FILES-END-->
</body>
</html>
